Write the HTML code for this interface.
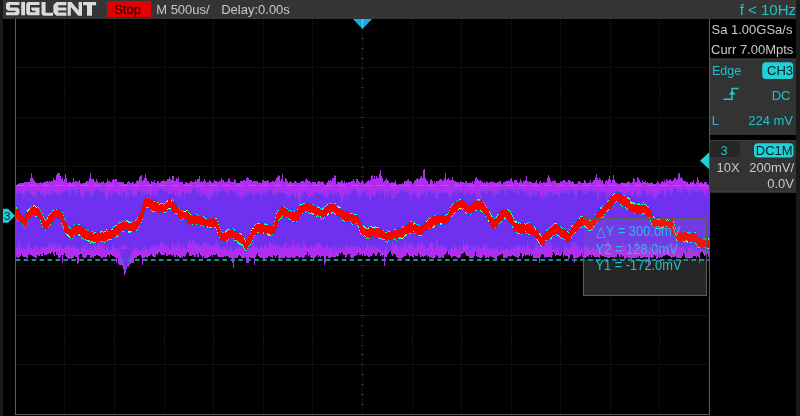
<!DOCTYPE html><html><head><meta charset="utf-8"><style>
html,body{margin:0;padding:0;background:#000;width:800px;height:416px;overflow:hidden}
svg{display:block;will-change:transform}
text{font-family:"Liberation Sans",sans-serif}
</style></head><body>
<svg width="800" height="416" viewBox="0 0 800 416">
<rect x="0" y="0" width="800" height="416" fill="#000"/>
<rect x="0" y="0" width="3" height="416" fill="#1a1a1a"/>
<rect x="796" y="0" width="4" height="416" fill="#1a1a1a"/>
<rect x="3" y="0" width="793" height="19" fill="#353535"/>
<rect x="583" y="218" width="124" height="78" fill="#171918"/>
<g shape-rendering="crispEdges" fill="none" stroke-width="1"><path d="M64.5 19V414" stroke="#191c19" stroke-dasharray="1 1"/><path d="M114.5 19V414" stroke="#191c19" stroke-dasharray="1 1"/><path d="M164.5 19V414" stroke="#191c19" stroke-dasharray="1 1"/><path d="M213.5 19V414" stroke="#191c19" stroke-dasharray="1 1"/><path d="M263.5 19V414" stroke="#191c19" stroke-dasharray="1 1"/><path d="M312.5 19V414" stroke="#191c19" stroke-dasharray="1 1"/><path d="M362.5 19V414" stroke="#191c19" stroke-dasharray="1 1"/><path d="M412.5 19V414" stroke="#191c19" stroke-dasharray="1 1"/><path d="M461.5 19V414" stroke="#191c19" stroke-dasharray="1 1"/><path d="M511.5 19V414" stroke="#191c19" stroke-dasharray="1 1"/><path d="M560.5 19V414" stroke="#191c19" stroke-dasharray="1 1"/><path d="M610.5 19V414" stroke="#191c19" stroke-dasharray="1 1"/><path d="M659.5 19V414" stroke="#191c19" stroke-dasharray="1 1"/><path d="M16 67.5H709" stroke="#191c19" stroke-dasharray="1 1"/><path d="M16 117.5H709" stroke="#191c19" stroke-dasharray="1 1"/><path d="M16 166.5H709" stroke="#191c19" stroke-dasharray="1 1"/><path d="M16 216.5H709" stroke="#191c19" stroke-dasharray="1 1"/><path d="M16 265.5H709" stroke="#191c19" stroke-dasharray="1 1"/><path d="M16 315.5H709" stroke="#191c19" stroke-dasharray="1 1"/><path d="M16 364.5H709" stroke="#191c19" stroke-dasharray="1 1"/><path d="M25 91.5H709" stroke="#191c19" stroke-dasharray="1 8.92"/><path d="M25 340.5H709" stroke="#191c19" stroke-dasharray="1 8.92"/><path d="M361 28.5h3M361 38.5h3M361 48.5h3M361 58.5h3M361 68.5h3M361 78.5h3M361 87.5h3M361 97.5h3M361 107.5h3M361 117.5h3M361 127.5h3M361 137.5h3M361 147.5h3M361 157.5h3M361 167.5h3M361 176.5h3M361 186.5h3M361 196.5h3M361 206.5h3M361 216.5h3M361 226.5h3M361 236.5h3M361 246.5h3M361 256.5h3M361 265.5h3M361 275.5h3M361 285.5h3M361 295.5h3M361 305.5h3M361 315.5h3M361 325.5h3M361 335.5h3M361 345.5h3M361 354.5h3M361 364.5h3M361 374.5h3M361 384.5h3M361 394.5h3M361 404.5h3" stroke="#2a2e2a"/><path d="M15.5 19V414.5H709.5V19" stroke="#5a5e5a"/></g>
<g shape-rendering="crispEdges">
<path d="M16 185H17V184H19V183H24V182H30V178H31V173H32V178H33V179H34V181H35V182H36V183H40V182H41V183H43V182H46V181H48V182H49V181H50V182H51V181H53V178H54V180H56V175H57V173H60V176H61V179H62V178H63V181H64V179H65V174H66V178H67V183H68V182H71V183H72V182H73V178H74V182H75V181H77V182H78V181H79V180H80V183H81V184H82V183H85V182H86V181H89V178H90V173H91V179H94V181H95V182H96V179H97V181H98V183H99V182H100V183H101V182H103V181H104V183H106V182H107V179H108V181H110V182H112V180H113V179H114V180H115V179H117V182H124V184H127V182H128V181H129V182H130V183H132V182H134V184H135V183H136V181H137V180H138V181H139V177H140V176H141V175H142V181H143V180H144V178H145V174H146V178H147V181H149V183H150V184H151V181H152V182H154V180H155V183H157V181H159V183H160V182H161V181H163V180H164V181H167V179H169V177H170V179H171V180H172V176H174V181H176V178H177V179H178V177H179V182H183V184H185V182H187V183H190V181H192V182H195V180H196V181H197V179H199V176H200V182H201V181H202V182H203V181H204V179H205V181H206V183H207V182H209V180H210V181H211V182H212V183H213V182H214V180H215V181H217V182H219V181H221V178H222V180H224V182H227V181H228V178H229V179H230V181H231V182H234V179H235V180H236V183H240V181H243V180H245V181H246V178H247V177H248V178H249V180H252V182H253V181H258V183H259V182H260V183H262V180H264V181H267V180H268V181H269V183H270V182H272V181H274V182H275V180H276V178H277V177H278V175H279V176H280V181H281V179H282V174H283V181H284V182H285V178H286V179H287V181H288V183H289V182H290V181H291V182H292V183H294V181H296V182H297V183H300V182H301V181H304V182H305V180H306V178H307V180H308V181H310V182H311V183H312V182H316V184H317V182H318V181H320V182H322V181H323V182H324V184H325V185H326V183H327V182H328V180H329V181H330V180H331V181H332V178H334V175H335V176H336V184H337V182H341V180H342V181H343V183H344V181H345V183H346V182H347V183H348V182H351V181H353V179H354V181H355V183H356V179H358V181H359V182H360V183H361V181H362V180H363V182H364V184H365V183H366V182H367V181H368V180H369V181H370V180H371V176H372V175H373V179H374V176H375V179H376V176H377V178H379V174H380V170H381V176H382V178H383V182H384V181H385V180H386V178H387V180H388V181H389V183H391V182H393V183H394V182H395V180H396V184H397V185H398V184H402V183H403V184H404V181H407V180H408V179H409V181H411V182H412V184H413V183H414V181H415V180H416V179H417V178H418V179H420V177H421V176H422V178H423V170H424V169H425V178H426V180H427V181H428V184H430V180H431V179H432V181H433V184H434V181H435V183H436V181H439V180H440V179H442V181H443V180H444V178H445V173H446V180H447V179H448V178H449V180H452V177H453V180H454V181H456V182H459V183H460V181H461V182H464V183H465V181H467V183H470V182H471V183H472V181H473V184H474V181H475V178H476V177H477V179H478V180H479V181H480V180H481V181H482V182H483V183H484V182H485V183H486V181H487V182H488V183H489V182H491V181H492V182H495V183H497V182H499V181H501V183H502V184H503V182H505V181H508V180H509V181H510V179H511V178H512V181H513V183H514V180H517V182H518V183H519V182H520V179H521V181H522V183H523V181H525V180H526V176H527V181H528V182H529V181H530V182H532V183H535V182H536V180H537V183H538V184H539V182H540V181H541V183H543V182H545V183H546V182H547V178H548V175H549V177H550V180H551V182H552V181H554V180H555V181H556V183H560V181H561V182H562V181H563V180H565V181H566V182H568V180H570V181H571V182H572V181H573V182H574V184H577V183H578V181H580V182H581V183H584V180H585V181H586V183H589V182H590V180H591V183H592V182H593V180H595V177H596V174H597V178H598V180H599V178H600V179H601V181H602V180H603V183H604V184H605V181H606V180H607V181H608V179H609V176H610V180H611V183H612V180H613V175H614V180H615V182H616V183H618V184H620V183H622V182H623V183H627V182H628V181H629V182H630V183H632V182H633V178H634V179H635V182H637V177H638V178H639V180H640V182H641V183H642V180H643V182H645V181H646V183H647V182H648V183H651V182H652V183H653V184H656V183H657V181H658V182H659V184H660V183H661V182H662V181H663V182H664V180H665V182H666V179H667V180H668V181H669V180H670V179H671V181H673V180H674V178H676V180H677V179H678V174H679V173H680V178H681V177H682V179H683V181H686V182H688V184H690V182H693V180H694V183H695V184H696V182H697V177H698V180H699V183H700V182H702V183H703V184H704V182H707V184H708V185H709V259H701V261H700V263H699V260H698V259H688V258H686V259H681V258H680V259H676V260H675V262H673V259H669V260H667V259H661V260H653V259H650V263H649V265H648V261H647V260H646V259H631V258H625V259H621V258H613V259H611V258H610V261H609V262H608V260H607V258H606V259H586V260H584V259H582V260H580V259H577V260H576V262H575V263H574V260H573V259H566V260H565V259H560V260H557V259H555V260H552V259H547V260H543V259H541V261H540V263H539V261H538V259H536V258H535V259H530V258H523V259H522V258H517V259H510V258H507V259H501V261H500V262H499V261H498V260H496V259H495V260H494V259H479V260H478V262H477V261H476V259H474V260H472V259H463V260H462V262H460V259H446V261H445V262H444V260H443V259H442V258H441V259H440V258H438V259H426V260H422V259H419V260H415V259H414V260H409V259H408V260H407V259H401V260H399V261H398V258H395V259H393V258H391V259H386V261H385V266H384V260H383V258H380V259H369V260H364V259H357V261H356V260H355V259H354V258H349V259H347V258H338V259H337V258H326V263H325V265H324V261H323V259H318V258H315V260H313V258H310V259H307V262H306V261H305V260H303V259H293V260H287V261H286V262H284V260H283V259H280V260H274V259H272V260H269V259H267V260H261V259H259V260H258V259H256V262H255V265H254V262H253V261H252V262H249V263H246V262H243V261H241V260H237V259H235V262H234V268H233V263H232V260H231V259H221V260H219V259H217V260H216V258H213V259H207V260H206V262H205V260H204V258H199V259H198V258H194V259H191V258H187V259H186V260H185V262H184V260H183V258H178V259H175V258H170V259H169V258H164V259H156V260H154V259H146V260H144V261H143V265H142V261H141V259H139V260H137V261H136V262H134V263H131V264H130V265H129V267H128V264H127V267H126V273H125V275H124V269H123V266H122V265H119V264H118V262H117V263H116V262H115V261H114V260H111V259H107V261H106V262H105V260H104V258H101V259H92V260H86V259H83V260H81V259H80V262H79V263H78V264H77V260H68V259H65V261H63V263H62V260H60V259H57V260H55V259H48V262H47V261H46V262H45V259H41V258H38V259H37V258H32V259H30V258H28V260H27V262H26V261H25V258H24V259H21V258H16Z" fill="#7030f0"/>
<path d="M16 185H17V184H19V183H24V182H30V178H31V173H32V178H33V179H34V181H35V182H36V183H40V182H41V183H43V182H46V181H48V182H49V181H50V182H51V181H53V178H54V180H56V175H57V173H60V176H61V179H62V178H63V181H64V179H65V174H66V178H67V183H68V182H71V183H72V182H73V178H74V182H75V181H77V182H78V181H79V180H80V183H81V184H82V183H85V182H86V181H89V178H90V173H91V179H94V181H95V182H96V179H97V181H98V183H99V182H100V183H101V182H103V181H104V183H106V182H107V179H108V181H110V182H112V180H113V179H114V180H115V179H117V182H124V184H127V182H128V181H129V182H130V183H132V182H134V184H135V183H136V181H137V180H138V181H139V177H140V176H141V175H142V181H143V180H144V178H145V174H146V178H147V181H149V183H150V184H151V181H152V182H154V180H155V183H157V181H159V183H160V182H161V181H163V180H164V181H167V179H169V177H170V179H171V180H172V176H174V181H176V178H177V179H178V177H179V182H183V184H185V182H187V183H190V181H192V182H195V180H196V181H197V179H199V176H200V182H201V181H202V182H203V181H204V179H205V181H206V183H207V182H209V180H210V181H211V182H212V183H213V182H214V180H215V181H217V182H219V181H221V178H222V180H224V182H227V181H228V178H229V179H230V181H231V182H234V179H235V180H236V183H240V181H243V180H245V181H246V178H247V177H248V178H249V180H252V182H253V181H258V183H259V182H260V183H262V180H264V181H267V180H268V181H269V183H270V182H272V181H274V182H275V180H276V178H277V177H278V175H279V176H280V181H281V179H282V174H283V181H284V182H285V178H286V179H287V181H288V183H289V182H290V181H291V182H292V183H294V181H296V182H297V183H300V182H301V181H304V182H305V180H306V178H307V180H308V181H310V182H311V183H312V182H316V184H317V182H318V181H320V182H322V181H323V182H324V184H325V185H326V183H327V182H328V180H329V181H330V180H331V181H332V178H334V175H335V176H336V184H337V182H341V180H342V181H343V183H344V181H345V183H346V182H347V183H348V182H351V181H353V179H354V181H355V183H356V179H358V181H359V182H360V183H361V181H362V180H363V182H364V184H365V183H366V182H367V181H368V180H369V181H370V180H371V176H372V175H373V179H374V176H375V179H376V176H377V178H379V174H380V170H381V176H382V178H383V182H384V181H385V180H386V178H387V180H388V181H389V183H391V182H393V183H394V182H395V180H396V184H397V185H398V184H402V183H403V184H404V181H407V180H408V179H409V181H411V182H412V184H413V183H414V181H415V180H416V179H417V178H418V179H420V177H421V176H422V178H423V170H424V169H425V178H426V180H427V181H428V184H430V180H431V179H432V181H433V184H434V181H435V183H436V181H439V180H440V179H442V181H443V180H444V178H445V173H446V180H447V179H448V178H449V180H452V177H453V180H454V181H456V182H459V183H460V181H461V182H464V183H465V181H467V183H470V182H471V183H472V181H473V184H474V181H475V178H476V177H477V179H478V180H479V181H480V180H481V181H482V182H483V183H484V182H485V183H486V181H487V182H488V183H489V182H491V181H492V182H495V183H497V182H499V181H501V183H502V184H503V182H505V181H508V180H509V181H510V179H511V178H512V181H513V183H514V180H517V182H518V183H519V182H520V179H521V181H522V183H523V181H525V180H526V176H527V181H528V182H529V181H530V182H532V183H535V182H536V180H537V183H538V184H539V182H540V181H541V183H543V182H545V183H546V182H547V178H548V175H549V177H550V180H551V182H552V181H554V180H555V181H556V183H560V181H561V182H562V181H563V180H565V181H566V182H568V180H570V181H571V182H572V181H573V182H574V184H577V183H578V181H580V182H581V183H584V180H585V181H586V183H589V182H590V180H591V183H592V182H593V180H595V177H596V174H597V178H598V180H599V178H600V179H601V181H602V180H603V183H604V184H605V181H606V180H607V181H608V179H609V176H610V180H611V183H612V180H613V175H614V180H615V182H616V183H618V184H620V183H622V182H623V183H627V182H628V181H629V182H630V183H632V182H633V178H634V179H635V182H637V177H638V178H639V180H640V182H641V183H642V180H643V182H645V181H646V183H647V182H648V183H651V182H652V183H653V184H656V183H657V181H658V182H659V184H660V183H661V182H662V181H663V182H664V180H665V182H666V179H667V180H668V181H669V180H670V179H671V181H673V180H674V178H676V180H677V179H678V174H679V173H680V178H681V177H682V179H683V181H686V182H688V184H690V182H693V180H694V183H695V184H696V182H697V177H698V180H699V183H700V182H702V183H703V184H704V182H707V184H708V185H709V195H708V191H707V194H706V197H705V195H704V193H702V191H701V192H699V189H698V192H695V191H692V193H691V192H690V195H689V193H688V191H687V190H686V189H684V190H683V193H678V192H677V190H676V188H674V191H673V193H672V196H671V191H670V193H669V192H668V189H667V194H666V198H665V197H664V191H662V193H661V194H658V195H657V198H655V201H654V198H653V195H652V193H651V196H650V194H649V196H648V195H647V196H646V191H644V190H642V194H641V196H640V197H639V196H636V191H634V195H633V197H632V195H630V193H628V195H627V194H626V196H625V199H624V200H623V198H622V197H621V196H620V197H619V196H618V193H617V195H616V194H615V198H614V201H613V197H611V195H610V196H609V198H608V200H607V199H606V192H605V194H604V193H603V192H601V193H600V194H599V201H598V199H597V190H596V195H595V193H593V191H592V189H591V192H590V191H588V193H586V195H585V194H584V193H582V190H580V191H578V194H577V199H575V194H574V195H573V190H571V191H570V194H568V193H567V194H565V191H564V192H563V194H561V193H560V197H559V198H558V194H556V195H555V194H554V196H553V195H552V192H551V194H549V193H548V197H547V196H546V195H545V198H544V194H543V201H542V198H541V196H540V193H539V191H538V194H537V196H535V193H534V194H532V196H531V198H530V195H529V196H528V195H527V193H526V191H525V193H524V192H523V191H522V192H521V191H519V195H517V193H516V189H515V193H514V192H513V190H512V189H511V191H509V188H508V191H507V194H506V195H505V193H504V189H503V191H501V189H500V193H498V194H496V198H495V195H494V197H493V198H492V191H491V192H489V191H488V195H487V194H486V193H484V192H483V190H482V198H480V200H479V196H478V199H477V198H476V194H475V193H473V196H471V195H470V192H469V194H468V193H467V192H466V195H465V194H464V190H463V193H461V192H459V190H458V193H457V195H455V192H453V194H452V195H451V198H449V195H448V194H447V192H446V193H442V194H441V192H440V193H439V194H438V199H437V198H436V196H435V193H432V194H431V192H428V195H427V198H426V196H425V192H424V193H423V195H421V196H420V198H419V203H418V198H417V196H416V195H415V193H414V196H413V194H412V197H411V201H410V194H409V193H407V192H404V193H403V191H401V192H399V194H398V193H397V197H396V194H395V197H394V199H392V197H391V196H390V192H389V197H388V195H387V193H386V197H385V199H384V192H382V193H381V194H380V191H379V195H378V193H377V191H376V195H375V197H374V195H373V196H372V194H371V200H369V196H366V190H365V193H363V194H361V198H359V194H358V200H357V193H356V189H355V191H354V190H353V191H352V193H351V194H349V195H348V196H347V198H346V194H345V195H344V198H343V201H342V204H341V199H340V196H339V192H338V193H337V196H336V193H335V194H334V193H333V196H332V193H331V192H330V193H329V196H328V197H327V198H326V197H324V195H323V193H322V194H320V195H319V193H318V194H316V192H315V193H314V198H313V196H312V195H311V198H310V197H309V198H308V193H307V195H306V193H305V192H304V197H303V192H302V196H301V203H300V207H299V204H298V198H297V193H296V200H295V196H294V194H293V195H291V196H290V197H288V199H287V195H286V194H284V192H283V194H282V193H279V192H278V194H277V195H275V196H274V195H272V191H271V190H270V191H269V192H268V193H266V196H265V194H264V193H263V195H262V200H261V196H260V193H259V194H258V192H257V193H256V194H255V196H254V197H253V195H252V194H251V193H250V194H248V195H247V196H246V197H245V195H244V198H243V197H241V200H240V198H239V196H238V195H237V196H236V195H235V192H233V193H232V190H231V191H230V193H229V194H228V197H227V193H225V192H224V190H223V189H222V191H221V192H219V194H218V195H216V194H215V192H214V193H213V197H212V196H211V199H210V200H208V197H207V199H206V195H204V193H203V195H202V196H200V194H199V192H198V193H196V189H195V188H193V191H192V193H190V196H189V193H186V194H185V197H184V192H183V193H182V194H181V197H180V196H179V197H177V194H176V196H175V195H174V192H173V193H172V194H169V195H168V191H166V192H164V191H162V189H160V190H159V191H158V194H157V197H156V196H155V191H154V194H152V195H151V199H150V195H149V194H146V195H145V194H144V193H143V196H142V194H141V193H140V190H139V192H137V196H133V195H131V191H130V193H129V196H128V195H127V197H126V199H125V193H123V194H122V197H121V194H120V196H119V197H118V194H117V192H115V193H112V196H111V195H110V193H109V196H108V200H106V198H105V194H104V193H102V191H99V193H98V190H97V189H96V190H95V192H94V195H93V196H92V197H91V198H90V194H89V193H88V192H87V191H86V192H85V195H84V196H83V200H82V198H81V194H80V189H79V192H78V190H77V193H76V196H75V193H74V190H72V193H71V194H70V196H69V191H67V190H65V193H64V192H63V193H62V195H61V196H60V194H59V195H58V196H57V195H56V192H55V193H53V191H52V193H51V196H50V194H49V196H48V195H47V193H46V197H45V199H44V195H41V194H40V192H37V196H36V197H34V196H32V195H31V193H28V192H27V191H26V193H25V197H24V200H23V194H20V192H19V193H18V194H16Z" fill="#8c38f0"/>
<path d="M16 248H17V245H18V244H19V240H20V244H21V249H22V247H25V250H26V249H27V244H28V243H29V244H30V247H31V248H32V249H33V247H35V246H36V244H37V247H39V249H40V247H43V246H44V248H46V247H47V246H48V244H49V242H50V245H51V243H52V246H53V244H54V243H55V245H56V248H57V244H60V246H61V245H62V248H63V249H64V248H65V247H66V245H67V246H68V245H69V246H70V248H71V247H74V245H75V248H76V247H77V248H78V249H79V250H80V251H81V247H82V248H83V245H86V249H87V245H88V248H89V249H90V247H92V251H93V248H94V246H95V243H96V247H97V245H98V244H99V241H100V245H102V242H103V246H105V250H106V247H107V248H108V249H109V250H110V249H112V245H113V244H114V245H115V248H116V251H117V248H118V251H119V247H120V248H121V245H123V246H124V244H125V246H126V247H128V248H129V249H130V248H131V250H132V248H133V249H134V244H135V248H136V247H137V248H138V250H140V251H142V248H144V245H145V246H146V248H147V250H148V249H149V248H150V245H153V247H154V244H155V246H156V247H157V245H158V246H159V245H160V242H161V241H162V244H164V243H165V244H166V247H167V246H169V248H170V250H171V246H172V242H173V244H174V247H175V244H176V245H177V243H178V241H179V244H181V248H182V245H184V248H185V247H186V249H187V244H188V243H189V239H190V240H191V243H192V240H194V241H195V244H196V243H197V244H199V245H202V247H203V241H204V242H205V244H206V241H207V245H209V241H210V247H211V245H213V246H214V245H215V242H216V240H217V242H218V245H220V248H221V249H222V247H224V246H225V248H226V241H227V249H228V250H229V247H230V245H231V247H232V251H234V249H235V247H236V249H237V246H239V244H240V246H241V248H242V246H243V249H244V252H245V246H246V244H247V249H248V248H249V246H250V249H251V248H252V241H253V243H254V246H255V248H256V246H257V248H259V249H260V247H261V245H262V248H263V247H264V245H267V248H269V242H270V243H271V244H273V246H274V245H275V244H276V246H277V245H279V247H280V248H281V246H282V247H284V243H287V248H288V245H289V248H290V245H291V246H292V240H293V246H294V242H295V246H296V243H297V245H299V244H300V248H301V246H302V247H303V242H304V241H305V247H306V246H307V247H308V248H310V245H312V247H313V246H314V245H315V247H316V243H317V245H318V242H319V243H320V244H321V246H322V245H323V247H324V250H325V248H326V247H327V244H328V247H329V248H330V247H333V252H334V245H335V246H336V249H337V250H338V248H340V246H341V250H342V246H343V249H344V247H345V246H346V244H347V245H348V248H349V247H350V245H351V246H356V247H357V248H358V246H360V248H361V249H362V246H364V249H365V248H366V245H367V242H368V245H369V246H370V245H371V248H372V247H373V245H374V247H375V246H376V248H377V246H378V247H379V250H380V247H381V250H382V252H383V251H384V250H385V247H388V251H389V253H390V252H391V245H392V241H393V243H394V245H395V244H398V247H399V246H400V245H401V248H402V244H403V246H404V243H405V242H406V244H407V247H408V245H409V242H410V244H411V242H412V245H414V246H415V248H416V247H417V244H418V243H419V242H420V244H421V241H422V240H423V244H424V245H425V249H427V248H428V247H429V245H430V241H431V242H432V243H433V244H434V248H435V245H436V240H437V241H438V245H439V246H440V245H441V247H442V243H443V247H445V246H446V248H447V250H449V251H450V249H451V247H453V250H454V243H455V247H457V249H458V250H459V245H461V251H462V246H463V240H464V246H465V245H466V242H467V243H468V245H469V246H470V251H471V246H472V245H473V247H474V245H475V246H476V249H477V248H478V245H479V247H480V248H481V249H482V246H483V245H484V244H487V245H488V248H489V247H490V246H491V248H492V249H493V248H494V249H496V246H498V252H499V250H500V246H502V250H503V247H504V250H505V249H506V248H507V249H508V250H509V249H510V247H511V246H512V248H513V246H514V247H515V249H516V247H517V244H518V245H519V246H521V247H522V248H523V245H524V247H525V246H527V240H528V245H529V249H530V247H531V250H532V249H534V248H535V244H536V242H537V245H538V246H539V244H540V243H541V245H542V246H543V247H544V246H545V239H546V242H548V246H549V240H550V242H551V245H552V250H553V249H555V247H556V248H557V246H558V247H559V253H560V252H562V251H564V246H565V245H566V247H568V246H569V248H570V246H571V241H572V243H574V242H576V246H577V244H578V245H579V249H580V250H581V248H582V246H583V250H584V246H585V247H586V246H587V245H588V248H589V246H590V249H591V250H592V247H594V248H595V249H597V246H599V247H600V251H601V250H602V247H604V244H606V241H608V240H609V243H610V246H612V244H613V247H614V249H615V250H616V248H617V250H620V247H621V246H622V239H623V245H625V244H626V247H627V251H628V249H629V250H630V251H631V246H632V248H633V247H634V244H635V241H636V242H637V241H638V242H639V246H641V247H642V246H643V244H645V248H647V246H648V247H649V244H650V245H651V248H652V249H653V250H654V249H655V243H656V249H657V250H659V249H660V250H661V252H662V250H664V249H665V247H667V243H668V245H669V249H670V251H671V242H672V243H673V247H674V244H675V248H677V247H678V246H679V247H680V248H682V247H685V250H686V253H687V251H688V248H690V247H691V248H692V245H693V248H694V250H695V249H696V247H697V250H698V251H700V249H701V250H703V244H704V250H705V246H706V248H708V249H709V259H701V261H700V263H699V260H698V259H688V258H686V259H681V258H680V259H676V260H675V262H673V259H669V260H667V259H661V260H653V259H650V263H649V265H648V261H647V260H646V259H631V258H625V259H621V258H613V259H611V258H610V261H609V262H608V260H607V258H606V259H586V260H584V259H582V260H580V259H577V260H576V262H575V263H574V260H573V259H566V260H565V259H560V260H557V259H555V260H552V259H547V260H543V259H541V261H540V263H539V261H538V259H536V258H535V259H530V258H523V259H522V258H517V259H510V258H507V259H501V261H500V262H499V261H498V260H496V259H495V260H494V259H479V260H478V262H477V261H476V259H474V260H472V259H463V260H462V262H460V259H446V261H445V262H444V260H443V259H442V258H441V259H440V258H438V259H426V260H422V259H419V260H415V259H414V260H409V259H408V260H407V259H401V260H399V261H398V258H395V259H393V258H391V259H386V261H385V266H384V260H383V258H380V259H369V260H364V259H357V261H356V260H355V259H354V258H349V259H347V258H338V259H337V258H326V263H325V265H324V261H323V259H318V258H315V260H313V258H310V259H307V262H306V261H305V260H303V259H293V260H287V261H286V262H284V260H283V259H280V260H274V259H272V260H269V259H267V260H261V259H259V260H258V259H256V262H255V265H254V262H253V261H252V262H249V263H246V262H243V261H241V260H237V259H235V262H234V268H233V263H232V260H231V259H221V260H219V259H217V260H216V258H213V259H207V260H206V262H205V260H204V258H199V259H198V258H194V259H191V258H187V259H186V260H185V262H184V260H183V258H178V259H175V258H170V259H169V258H164V259H156V260H154V259H146V260H144V261H143V265H142V261H141V259H139V260H137V261H136V262H134V263H131V264H130V265H129V267H128V264H127V267H126V273H125V275H124V269H123V266H122V265H119V264H118V262H117V263H116V262H115V261H114V260H111V259H107V261H106V262H105V260H104V258H101V259H92V260H86V259H83V260H81V259H80V262H79V263H78V264H77V260H68V259H65V261H63V263H62V260H60V259H57V260H55V259H48V262H47V261H46V262H45V259H41V258H38V259H37V258H32V259H30V258H28V260H27V262H26V261H25V258H24V259H21V258H16Z" fill="#8c38f0"/>
<path d="M16 185H17V184H19V183H24V182H30V178H31V173H32V178H33V179H34V181H35V182H36V183H40V182H41V183H43V182H46V181H48V182H49V181H50V182H51V181H53V178H54V180H56V175H57V173H60V176H61V179H62V178H63V181H64V179H65V174H66V178H67V183H68V182H71V183H72V182H73V178H74V182H75V181H77V182H78V181H79V180H80V183H81V184H82V183H85V182H86V181H89V178H90V173H91V179H94V181H95V182H96V179H97V181H98V183H99V182H100V183H101V182H103V181H104V183H106V182H107V179H108V181H110V182H112V180H113V179H114V180H115V179H117V182H124V184H127V182H128V181H129V182H130V183H132V182H134V184H135V183H136V181H137V180H138V181H139V177H140V176H141V175H142V181H143V180H144V178H145V174H146V178H147V181H149V183H150V184H151V181H152V182H154V180H155V183H157V181H159V183H160V182H161V181H163V180H164V181H167V179H169V177H170V179H171V180H172V176H174V181H176V178H177V179H178V177H179V182H183V184H185V182H187V183H190V181H192V182H195V180H196V181H197V179H199V176H200V182H201V181H202V182H203V181H204V179H205V181H206V183H207V182H209V180H210V181H211V182H212V183H213V182H214V180H215V181H217V182H219V181H221V178H222V180H224V182H227V181H228V178H229V179H230V181H231V182H234V179H235V180H236V183H240V181H243V180H245V181H246V178H247V177H248V178H249V180H252V182H253V181H258V183H259V182H260V183H262V180H264V181H267V180H268V181H269V183H270V182H272V181H274V182H275V180H276V178H277V177H278V175H279V176H280V181H281V179H282V174H283V181H284V182H285V178H286V179H287V181H288V183H289V182H290V181H291V182H292V183H294V181H296V182H297V183H300V182H301V181H304V182H305V180H306V178H307V180H308V181H310V182H311V183H312V182H316V184H317V182H318V181H320V182H322V181H323V182H324V184H325V185H326V183H327V182H328V180H329V181H330V180H331V181H332V178H334V175H335V176H336V184H337V182H341V180H342V181H343V183H344V181H345V183H346V182H347V183H348V182H351V181H353V179H354V181H355V183H356V179H358V181H359V182H360V183H361V181H362V180H363V182H364V184H365V183H366V182H367V181H368V180H369V181H370V180H371V176H372V175H373V179H374V176H375V179H376V176H377V178H379V174H380V170H381V176H382V178H383V182H384V181H385V180H386V178H387V180H388V181H389V183H391V182H393V183H394V182H395V180H396V184H397V185H398V184H402V183H403V184H404V181H407V180H408V179H409V181H411V182H412V184H413V183H414V181H415V180H416V179H417V178H418V179H420V177H421V176H422V178H423V170H424V169H425V178H426V180H427V181H428V184H430V180H431V179H432V181H433V184H434V181H435V183H436V181H439V180H440V179H442V181H443V180H444V178H445V173H446V180H447V179H448V178H449V180H452V177H453V180H454V181H456V182H459V183H460V181H461V182H464V183H465V181H467V183H470V182H471V183H472V181H473V184H474V181H475V178H476V177H477V179H478V180H479V181H480V180H481V181H482V182H483V183H484V182H485V183H486V181H487V182H488V183H489V182H491V181H492V182H495V183H497V182H499V181H501V183H502V184H503V182H505V181H508V180H509V181H510V179H511V178H512V181H513V183H514V180H517V182H518V183H519V182H520V179H521V181H522V183H523V181H525V180H526V176H527V181H528V182H529V181H530V182H532V183H535V182H536V180H537V183H538V184H539V182H540V181H541V183H543V182H545V183H546V182H547V178H548V175H549V177H550V180H551V182H552V181H554V180H555V181H556V183H560V181H561V182H562V181H563V180H565V181H566V182H568V180H570V181H571V182H572V181H573V182H574V184H577V183H578V181H580V182H581V183H584V180H585V181H586V183H589V182H590V180H591V183H592V182H593V180H595V177H596V174H597V178H598V180H599V178H600V179H601V181H602V180H603V183H604V184H605V181H606V180H607V181H608V179H609V176H610V180H611V183H612V180H613V175H614V180H615V182H616V183H618V184H620V183H622V182H623V183H627V182H628V181H629V182H630V183H632V182H633V178H634V179H635V182H637V177H638V178H639V180H640V182H641V183H642V180H643V182H645V181H646V183H647V182H648V183H651V182H652V183H653V184H656V183H657V181H658V182H659V184H660V183H661V182H662V181H663V182H664V180H665V182H666V179H667V180H668V181H669V180H670V179H671V181H673V180H674V178H676V180H677V179H678V174H679V173H680V178H681V177H682V179H683V181H686V182H688V184H690V182H693V180H694V183H695V184H696V182H697V177H698V180H699V183H700V182H702V183H703V184H704V182H707V184H708V185H709V193H708V189H707V192H706V193H705V191H704V189H703V191H702V189H699V187H698V188H695V187H694V188H692V190H691V188H690V189H688V190H687V189H686V187H684V188H683V189H682V188H679V189H676V187H674V190H672V193H671V189H668V187H667V188H666V191H664V189H663V190H661V192H660V190H659V191H658V194H656V192H655V195H653V192H652V190H651V191H649V192H648V191H647V195H646V190H645V189H644V187H642V190H641V192H640V193H638V195H637V194H636V190H634V194H633V195H632V190H630V192H627V191H626V194H623V193H621V191H620V192H619V189H618V190H617V192H616V193H615V194H614V197H613V193H611V192H607V191H606V188H605V190H604V192H603V191H600V190H599V192H598V193H597V189H596V192H595V191H594V189H593V188H591V189H589V190H588V189H586V190H582V189H579V190H577V192H576V195H575V190H573V187H572V189H571V190H570V188H569V189H566V191H565V190H563V192H560V193H559V194H558V192H555V191H553V192H552V190H551V191H548V192H547V191H546V192H545V194H544V193H543V197H542V194H540V191H539V190H538V191H535V190H534V191H532V192H531V194H530V192H529V191H526V190H524V189H522V190H521V188H520V189H519V188H518V189H516V188H515V190H514V189H512V188H511V189H509V187H508V189H507V188H503V190H501V188H500V189H498V190H496V193H495V192H494V190H493V191H492V189H491V190H489V188H488V191H487V189H484V190H483V189H482V192H481V191H480V195H479V191H478V196H477V197H476V193H475V191H473V194H472V191H471V189H470V188H469V193H468V192H467V190H466V193H464V189H461V188H458V189H457V190H456V191H454V189H453V190H451V193H450V194H449V193H448V192H447V191H446V192H443V190H442V191H440V192H437V191H436V190H435V191H434V192H432V193H431V190H427V192H426V191H425V189H424V191H421V192H420V194H419V197H418V195H417V194H416V192H415V191H414V192H413V190H412V194H411V198H410V193H409V191H407V189H403V188H402V189H401V188H399V193H398V192H397V194H396V190H395V194H394V193H393V190H391V191H389V194H388V192H387V191H386V194H385V195H384V189H382V190H379V192H378V191H377V189H376V191H375V193H374V194H372V191H371V197H370V198H369V193H368V190H367V189H366V188H365V189H364V190H363V191H361V195H360V197H359V191H358V194H357V189H356V187H355V188H353V189H351V190H349V191H348V192H346V193H344V194H343V195H342V198H341V194H340V192H339V191H337V192H336V190H335V191H332V190H330V191H328V192H327V193H324V192H320V193H319V191H318V192H316V190H314V194H313V195H312V194H311V195H310V194H309V197H308V192H307V193H306V192H305V190H304V194H303V191H302V192H301V198H298V196H297V192H296V197H295V193H294V191H293V192H291V191H290V192H289V194H288V196H287V194H286V193H285V192H284V190H282V189H281V190H280V191H278V192H274V191H273V190H271V189H266V192H265V190H262V195H261V193H260V191H258V189H257V191H256V192H253V190H252V189H250V190H249V192H247V191H246V192H245V191H244V195H243V194H241V196H240V194H239V193H238V191H237V190H236V191H235V190H232V189H230V191H229V192H227V191H226V190H224V189H223V187H222V190H221V188H219V191H217V190H216V189H213V191H211V193H210V194H207V196H206V194H205V193H204V192H203V191H202V190H200V187H198V188H197V189H196V187H192V188H191V191H190V195H189V192H186V193H184V190H183V191H181V194H180V193H179V194H178V192H177V191H176V194H175V193H174V190H172V191H170V190H169V191H168V189H166V190H164V188H162V187H160V189H159V190H155V189H154V190H153V191H152V192H151V196H150V192H148V190H146V191H143V189H141V190H140V189H139V190H137V194H134V192H133V191H132V192H131V188H127V191H126V192H125V189H124V190H123V191H122V190H121V189H120V193H119V194H118V191H115V190H114V191H112V192H111V191H109V192H108V196H107V195H105V190H104V191H103V188H102V189H100V188H98V189H97V188H95V190H94V192H93V191H90V190H89V189H87V188H86V187H85V190H84V193H83V194H81V193H80V188H76V189H75V190H74V188H72V189H70V190H67V189H65V192H64V191H62V192H61V193H60V191H59V192H58V193H57V192H56V191H55V192H53V189H51V190H49V192H48V193H47V192H46V196H44V191H42V192H41V191H40V189H39V191H35V192H34V194H32V192H31V190H30V189H27V190H26V191H24V193H23V192H22V193H21V192H20V190H18V191H16Z" fill="#b02cf0"/>
<path d="M16 250H17V248H20V250H21V251H22V250H24V249H25V252H26V251H27V248H28V249H29V248H32V249H33V250H37V251H39V250H40V248H41V250H42V247H44V249H46V248H47V250H48V248H51V246H52V248H53V244H54V245H55V247H56V248H57V245H58V247H60V249H62V248H63V249H64V248H65V247H66V248H67V249H68V247H70V248H74V246H75V249H79V251H81V250H82V248H85V249H88V252H89V251H90V249H91V250H92V251H93V249H94V248H95V245H96V247H97V246H100V247H101V251H102V248H103V250H106V248H107V249H108V250H109V251H112V249H113V248H114V249H115V248H116V251H117V248H118V251H121V248H122V246H123V247H124V246H125V248H126V249H129V250H131V251H132V250H134V248H135V250H136V249H137V250H140V251H143V252H144V251H145V250H146V249H147V251H149V252H150V251H151V250H152V249H153V248H154V245H155V246H156V247H157V248H158V249H159V247H160V244H161V246H162V249H163V247H164V248H165V247H166V248H169V250H171V249H172V245H174V249H176V247H177V248H178V247H179V249H181V250H182V248H183V249H187V248H188V246H189V242H190V241H191V245H194V246H197V247H199V248H200V247H201V246H202V247H203V246H204V248H206V245H210V248H211V246H213V249H214V248H215V245H216V244H217V246H218V248H220V249H222V250H224V248H226V245H227V249H228V250H231V251H234V250H235V248H236V250H237V247H238V250H239V249H241V252H242V250H244V252H245V249H246V248H247V249H248V248H249V247H250V249H251V248H252V246H253V247H254V248H255V249H256V250H257V249H259V250H260V247H262V248H263V247H264V246H266V247H267V249H268V248H269V242H270V246H271V247H272V246H273V247H276V248H279V247H280V249H281V247H284V245H285V244H286V246H287V250H288V247H289V248H290V249H291V248H292V242H293V248H294V244H295V246H297V247H299V248H300V251H301V249H302V250H303V246H304V245H305V247H306V246H307V247H308V249H309V248H312V250H313V248H314V247H315V248H316V245H317V247H318V246H321V249H322V248H324V250H325V248H327V245H328V249H329V250H330V249H332V251H333V252H334V250H336V252H337V250H338V252H339V251H340V249H341V251H342V248H343V251H344V250H346V249H348V250H349V249H350V248H351V249H355V248H356V249H359V248H361V249H362V250H364V249H365V248H366V247H367V248H368V250H370V248H372V250H373V249H374V250H377V249H378V248H379V250H380V249H381V252H383V251H388V253H390V252H391V250H392V249H393V247H397V249H402V247H403V248H404V247H405V246H406V248H407V249H408V247H409V244H410V246H411V245H412V248H413V249H415V250H416V249H417V247H418V246H420V248H421V244H423V247H425V249H427V248H428V247H429V245H430V243H432V245H433V247H434V249H436V247H440V249H441V247H443V248H445V247H446V249H447V251H451V249H453V251H454V248H455V247H457V249H458V250H459V248H461V251H463V245H464V247H465V246H468V249H470V251H471V250H472V251H473V250H477V249H478V247H479V249H480V250H481V251H482V248H483V247H484V249H486V250H487V251H488V252H489V251H490V249H491V251H493V249H495V251H496V249H498V252H500V250H502V252H503V250H504V251H505V249H506V248H507V249H508V251H509V249H510V250H511V249H512V251H513V249H516V248H517V245H518V248H519V249H520V251H522V250H523V248H524V249H527V246H529V249H531V250H532V249H533V250H535V247H536V244H537V248H538V250H539V248H540V247H541V248H542V249H543V247H545V246H548V249H549V246H550V244H551V247H552V250H554V249H555V251H556V252H557V250H558V251H559V253H560V252H562V251H563V253H564V249H565V245H566V247H567V250H568V249H569V251H570V250H571V247H573V248H574V245H576V249H577V247H578V248H579V250H581V249H583V250H585V248H588V249H589V250H597V249H599V250H600V251H601V250H602V249H605V248H606V247H607V244H608V245H609V247H610V249H613V251H614V252H615V250H616V248H617V250H620V249H622V246H623V249H624V248H626V251H628V249H629V251H630V252H631V250H633V247H634V248H635V244H636V246H637V244H638V248H640V249H645V250H646V251H649V247H650V248H651V251H654V250H655V247H656V250H657V252H658V253H659V251H661V252H665V251H666V249H667V248H668V250H669V251H671V249H672V250H674V248H675V250H676V248H677V247H678V246H679V247H680V250H682V251H683V250H685V252H686V253H687V252H688V250H689V251H691V252H692V251H694V253H696V252H697V253H699V254H701V250H703V249H704V251H705V250H706V249H708V252H709V259H701V261H700V263H699V260H698V259H688V258H686V259H681V258H680V259H676V260H675V262H673V259H669V260H667V259H661V260H653V259H650V263H649V265H648V261H647V260H646V259H631V258H625V259H621V258H613V259H611V258H610V261H609V262H608V260H607V258H606V259H586V260H584V259H582V260H580V259H577V260H576V262H575V263H574V260H573V259H566V260H565V259H560V260H557V259H555V260H552V259H547V260H543V259H541V261H540V263H539V261H538V259H536V258H535V259H530V258H523V259H522V258H517V259H510V258H507V259H501V261H500V262H499V261H498V260H496V259H495V260H494V259H479V260H478V262H477V261H476V259H474V260H472V259H463V260H462V262H460V259H446V261H445V262H444V260H443V259H442V258H441V259H440V258H438V259H426V260H422V259H419V260H415V259H414V260H409V259H408V260H407V259H401V260H399V261H398V258H395V259H393V258H391V259H386V261H385V266H384V260H383V258H380V259H369V260H364V259H357V261H356V260H355V259H354V258H349V259H347V258H338V259H337V258H326V263H325V265H324V261H323V259H318V258H315V260H313V258H310V259H307V262H306V261H305V260H303V259H293V260H287V261H286V262H284V260H283V259H280V260H274V259H272V260H269V259H267V260H261V259H259V260H258V259H256V262H255V265H254V262H253V261H252V262H249V263H246V262H243V261H241V260H237V259H235V262H234V268H233V263H232V260H231V259H221V260H219V259H217V260H216V258H213V259H207V260H206V262H205V260H204V258H199V259H198V258H194V259H191V258H187V259H186V260H185V262H184V260H183V258H178V259H175V258H170V259H169V258H164V259H156V260H154V259H146V260H144V261H143V265H142V261H141V259H139V260H137V261H136V262H134V263H131V264H130V265H129V267H128V264H127V267H126V273H125V275H124V269H123V266H122V265H119V264H118V262H117V263H116V262H115V261H114V260H111V259H107V261H106V262H105V260H104V258H101V259H92V260H86V259H83V260H81V259H80V262H79V263H78V264H77V260H68V259H65V261H63V263H62V260H60V259H57V260H55V259H48V262H47V261H46V262H45V259H41V258H38V259H37V258H32V259H30V258H28V260H27V262H26V261H25V258H24V259H21V258H16Z" fill="#b02cf0"/>
<path d="M117 249L120 252L122 258L125 268L127 269L129 262L131 255L134 249Z" fill="#7030f0"/>
<path d="M16 208H18V209H19V210H20V213H21V214H22V215H23V216H24V217H25V214H26V213H27V211H28V210H29V209H30V208H31V207H32V206H34V205H35V206H36V207H38V208H39V209H40V211H41V213H42V215H43V217H44V219H45V221H46V220H47V218H48V216H49V215H50V214H51V213H52V211H54V210H56V209H57V210H60V211H62V213H63V216H64V219H65V221H66V223H67V225H68V227H69V228H70V229H72V227H73V226H74V225H80V226H82V227H84V228H85V229H86V230H87V231H90V232H93V233H98V232H103V233H104V232H106V230H107V231H108V230H109V229H113V227H115V226H116V225H118V224H119V223H120V222H121V221H122V222H126V221H128V222H130V223H132V222H134V221H136V220H137V218H138V216H139V214H140V212H141V209H142V205H143V202H144V199H145V197H146V196H147V197H149V198H150V199H151V200H153V201H156V202H157V203H159V204H164V203H165V202H167V201H168V200H171V201H172V200H173V201H174V202H175V204H176V205H177V206H178V207H179V209H180V210H181V211H182V210H183V212H184V211H186V210H187V211H188V213H189V214H190V215H191V216H193V215H195V214H196V215H200V216H201V217H204V218H208V219H210V218H211V219H213V218H217V221H218V224H219V227H220V230H221V231H222V232H226V231H227V230H231V229H234V230H235V231H237V232H238V233H240V234H241V235H242V236H243V238H244V239H245V241H246V240H247V239H248V236H249V234H250V233H251V230H252V228H254V226H255V225H256V224H260V223H263V224H266V225H268V226H273V225H274V221H275V218H276V214H277V212H278V211H279V209H280V208H281V206H284V208H286V209H288V210H291V211H292V210H293V211H294V212H296V211H297V209H298V208H299V206H300V205H302V204H303V203H305V202H306V203H310V204H312V205H314V206H316V207H319V208H320V209H321V210H322V209H323V208H324V207H326V206H327V205H329V204H332V203H333V204H336V205H337V206H338V207H340V208H341V209H342V210H343V211H344V212H345V211H347V212H349V213H350V214H354V215H357V216H358V218H359V220H360V222H361V224H362V225H363V226H364V227H365V228H366V229H368V228H369V227H372V228H375V227H376V228H380V230H383V231H385V232H387V231H393V230H396V229H401V228H403V227H404V226H405V224H406V225H407V224H408V223H409V222H413V224H414V223H415V224H416V225H419V226H421V225H423V224H424V223H425V222H426V221H427V220H428V219H430V218H432V217H433V216H435V215H446V214H448V212H449V210H450V208H451V206H452V205H453V204H454V203H455V202H456V201H457V200H461V199H463V200H464V201H465V202H466V204H467V205H468V206H470V205H471V203H473V202H475V201H476V200H480V199H481V200H482V202H483V203H484V204H485V206H486V208H487V209H488V210H489V212H490V214H491V216H492V217H493V219H495V218H496V217H497V215H499V212H501V211H502V210H503V209H504V210H508V211H510V212H511V214H512V216H513V218H514V221H515V222H518V223H520V224H521V223H525V224H528V223H530V224H532V225H533V226H534V227H535V229H536V230H537V231H538V232H539V234H540V235H541V237H542V235H543V234H544V233H545V232H546V231H547V230H548V229H549V228H551V227H552V226H553V225H554V224H558V225H560V226H561V227H562V228H563V229H565V230H566V231H568V232H569V230H570V229H571V227H572V226H573V225H574V223H575V222H576V221H577V220H578V219H579V218H580V217H581V216H585V218H586V219H589V220H591V219H592V218H594V217H595V215H596V214H597V212H598V211H599V209H600V208H602V207H603V206H604V205H605V204H606V203H607V202H608V201H609V199H610V198H611V196H612V195H613V194H614V193H615V194H616V193H620V194H621V195H624V196H625V197H626V198H629V199H630V202H631V203H634V204H640V205H643V203H644V205H646V206H648V207H649V206H650V209H651V212H652V215H653V217H654V218H657V219H663V220H667V219H668V220H670V221H672V220H673V222H674V225H675V228H676V231H677V232H681V231H682V232H688V233H689V232H690V233H693V232H694V233H696V234H697V236H698V237H699V238H702V239H703V238H705V239H706V238H707V239H709V249H706V247H698V246H697V244H696V243H695V242H687V241H678V240H676V239H675V237H674V234H673V233H672V231H671V229H670V228H667V227H662V228H653V227H652V224H651V221H650V218H649V217H648V216H647V215H646V213H643V214H642V213H639V214H638V213H634V212H631V211H629V210H628V209H627V208H626V207H625V206H622V205H621V204H620V203H619V202H616V203H615V204H614V206H612V207H611V209H610V210H608V211H607V212H606V213H605V214H604V216H603V217H601V219H600V220H599V222H597V224H596V225H595V226H594V227H593V229H591V230H588V228H587V227H585V226H582V227H580V228H579V229H578V230H577V231H576V232H575V233H573V235H572V237H571V239H570V241H569V242H567V241H566V240H565V239H564V238H561V237H560V236H559V235H557V234H555V235H554V236H553V237H552V238H551V239H550V240H548V241H545V243H544V244H543V246H540V244H539V242H538V240H537V239H536V237H535V236H533V235H530V234H527V233H526V232H525V233H522V234H520V233H517V232H516V231H514V230H513V227H512V225H511V224H510V222H509V221H508V220H507V219H505V218H503V220H502V221H501V222H500V223H499V224H498V226H497V227H496V228H495V229H493V228H492V226H491V225H490V223H489V221H488V219H487V216H485V214H484V213H483V212H481V211H480V210H475V211H474V212H472V213H471V214H468V213H467V214H466V213H465V210H464V209H462V208H461V209H459V210H457V211H456V212H455V213H453V215H452V216H451V218H450V221H449V222H447V223H442V224H437V225H435V226H434V227H432V228H431V229H428V230H426V231H425V232H424V233H422V235H416V234H414V232H413V233H408V234H407V235H405V236H404V237H403V238H398V239H397V240H395V239H394V240H388V242H387V241H385V240H383V239H382V238H379V237H378V238H375V237H374V236H372V237H370V238H366V236H365V235H364V236H363V235H362V234H361V233H360V230H359V227H358V225H357V223H356V224H351V222H348V221H347V222H344V221H343V220H342V218H341V217H339V216H337V215H336V214H335V213H334V212H332V213H331V214H330V215H329V214H328V215H326V216H325V217H324V218H322V219H321V217H319V216H318V215H317V216H316V215H314V214H312V213H309V212H307V211H306V212H304V213H303V214H302V215H300V216H299V219H298V220H297V221H296V222H294V221H292V220H289V219H288V218H284V217H283V216H282V218H281V219H280V220H279V221H278V224H277V227H276V231H275V233H274V234H272V235H268V234H266V233H255V235H254V237H253V240H252V242H251V244H250V246H249V247H248V249H247V251H245V249H244V247H243V245H241V244H239V243H238V242H237V241H236V240H234V238H233V237H230V238H229V239H228V240H227V241H226V242H224V243H223V242H222V241H221V239H220V238H219V236H218V232H217V229H216V227H214V228H208V227H206V226H202V225H200V224H195V225H193V224H191V225H190V224H189V223H188V222H187V219H182V220H181V219H180V218H179V217H178V215H177V214H175V213H174V212H173V211H171V209H168V210H167V211H166V212H164V213H161V212H160V213H158V212H157V211H152V210H151V209H150V208H148V207H146V209H145V212H144V215H143V219H142V222H141V224H140V225H139V227H138V229H137V230H136V231H133V232H128V230H124V231H122V232H120V233H119V235H118V236H117V237H116V238H112V239H108V240H107V241H105V242H104V241H97V243H93V242H91V243H90V241H88V240H86V239H85V240H84V239H83V238H82V237H81V235H74V236H73V238H72V239H71V238H70V237H69V236H68V235H67V234H66V233H65V231H64V228H63V226H62V223H61V220H60V219H59V218H56V219H54V221H53V222H52V223H51V224H50V225H49V227H48V228H47V230H45V229H44V228H43V226H42V223H41V221H40V219H39V218H38V217H37V216H35V215H34V214H33V215H32V216H31V217H30V218H29V220H28V222H27V225H26V226H25V227H24V226H23V224H22V222H19V221H18V220H17V219H16Z" fill="#ff0000"/>
<path d="M16 207h1v1h-1zM33 206h1v1h-1zM40 210h1v1h-1zM41 212h1v1h-1zM42 214h1v1h-1zM44 218h1v1h-1zM45 220h1v1h-1zM46 219h1v1h-1zM47 217h1v1h-1zM48 215h1v1h-1zM49 214h1v1h-1zM50 213h1v1h-1zM52 210h1v1h-1zM53 210h1v1h-1zM56 209h1v1h-1zM62 212h1v1h-1zM63 215h1v1h-1zM64 218h1v1h-1zM65 220h1v1h-1zM69 227h1v1h-1zM70 228h1v1h-1zM78 224h1v1h-1zM79 224h1v1h-1zM94 232h1v1h-1zM95 232h1v1h-1zM100 231h1v1h-1zM100 232h1v1h-1zM101 231h1v1h-1zM102 231h1v1h-1zM103 232h1v1h-1zM104 231h1v1h-1zM105 231h1v1h-1zM107 231h1v1h-1zM112 228h1v1h-1zM113 226h1v1h-1zM114 226h1v1h-1zM115 225h1v1h-1zM116 225h1v1h-1zM119 222h1v1h-1zM130 222h1v1h-1zM131 222h1v1h-1zM132 221h1v1h-1zM135 220h1v1h-1zM136 219h1v1h-1zM137 217h1v1h-1zM163 204h1v1h-1zM164 203h1v1h-1zM165 202h1v1h-1zM166 201h1v1h-1zM167 200h1v1h-1zM171 200h1v1h-1zM171 201h1v1h-1zM198 215h1v1h-1zM205 218h1v1h-1zM206 218h1v1h-1zM225 231h1v1h-1zM226 230h1v1h-1zM227 229h1v1h-1zM228 229h1v1h-1zM229 229h1v1h-1zM234 229h1v1h-1zM234 230h1v1h-1zM259 223h1v1h-1zM266 224h1v1h-1zM267 224h1v1h-1zM273 225h1v1h-1zM274 221h1v1h-1zM277 211h1v1h-1zM278 210h1v1h-1zM284 207h1v1h-1zM290 210h1v1h-1zM291 211h1v1h-1zM302 204h1v1h-1zM303 203h1v1h-1zM304 203h1v1h-1zM319 207h1v1h-1zM320 208h1v1h-1zM321 209h1v1h-1zM322 208h1v1h-1zM323 207h1v1h-1zM325 206h1v1h-1zM326 205h1v1h-1zM334 203h1v1h-1zM335 203h1v1h-1zM350 213h1v1h-1zM351 213h1v1h-1zM354 214h1v1h-1zM355 214h1v1h-1zM356 214h1v1h-1zM363 225h1v1h-1zM374 227h1v1h-1zM375 226h1v1h-1zM378 227h1v1h-1zM383 230h1v1h-1zM388 231h1v1h-1zM389 231h1v1h-1zM394 229h1v1h-1zM395 229h1v1h-1zM413 223h1v1h-1zM413 224h1v1h-1zM414 222h1v1h-1zM414 223h1v1h-1zM419 225h1v1h-1zM445 215h1v1h-1zM446 214h1v1h-1zM447 214h1v1h-1zM477 199h1v1h-1zM478 199h1v1h-1zM479 199h1v1h-1zM489 211h1v1h-1zM490 213h1v1h-1zM491 215h1v1h-1zM492 216h1v1h-1zM510 211h1v1h-1zM511 213h1v1h-1zM512 215h1v1h-1zM513 218h1v1h-1zM514 221h1v1h-1zM518 222h1v1h-1zM526 223h1v1h-1zM539 234h1v1h-1zM540 235h1v1h-1zM546 230h1v1h-1zM547 229h1v1h-1zM560 226h1v1h-1zM561 227h1v1h-1zM562 228h1v1h-1zM569 229h1v1h-1zM574 222h1v1h-1zM580 216h1v1h-1zM595 214h1v1h-1zM600 207h1v1h-1zM600 208h1v1h-1zM601 207h1v1h-1zM601 208h1v1h-1zM623 194h1v1h-1zM624 195h1v1h-1zM627 197h1v1h-1zM628 197h1v1h-1zM629 198h1v1h-1zM630 201h1v1h-1zM631 202h1v1h-1zM646 205h1v1h-1zM653 216h1v1h-1zM653 217h1v1h-1zM654 217h1v1h-1zM654 218h1v1h-1zM658 219h1v1h-1zM659 219h1v1h-1zM687 232h1v1h-1zM694 232h1v1h-1zM695 232h1v1h-1zM708 239h1v1h-1zM35 216h1v1h-1zM36 216h1v1h-1zM45 230h1v1h-1zM65 233h1v1h-1zM66 234h1v1h-1zM67 235h1v1h-1zM68 236h1v1h-1zM69 237h1v1h-1zM78 235h1v1h-1zM79 235h1v1h-1zM85 239h1v1h-1zM86 240h1v1h-1zM87 240h1v1h-1zM91 241h1v1h-1zM92 241h1v1h-1zM93 242h1v1h-1zM102 241h1v1h-1zM117 236h1v1h-1zM117 235h1v1h-1zM122 231h1v1h-1zM123 231h1v1h-1zM128 232h1v1h-1zM129 232h1v1h-1zM130 232h1v1h-1zM136 230h1v1h-1zM137 229h1v1h-1zM138 227h1v1h-1zM141 222h1v1h-1zM142 219h1v1h-1zM164 212h1v1h-1zM165 212h1v1h-1zM170 209h1v1h-1zM175 213h1v1h-1zM176 213h1v1h-1zM177 214h1v1h-1zM192 224h1v1h-1zM207 227h1v1h-1zM214 227h1v1h-1zM215 227h1v1h-1zM219 237h1v1h-1zM226 241h1v1h-1zM235 240h1v1h-1zM237 242h1v1h-1zM238 243h1v1h-1zM239 244h1v1h-1zM240 243h1v1h-1zM241 244h1v1h-1zM242 244h1v1h-1zM243 247h1v1h-1zM244 249h1v1h-1zM245 250h1v1h-1zM246 250h1v1h-1zM247 248h1v1h-1zM250 244h1v1h-1zM251 242h1v1h-1zM252 240h1v1h-1zM270 235h1v1h-1zM288 218h1v1h-1zM289 219h1v1h-1zM290 219h1v1h-1zM292 221h1v1h-1zM293 221h1v1h-1zM296 221h1v1h-1zM305 212h1v1h-1zM306 211h1v1h-1zM308 212h1v1h-1zM309 213h1v1h-1zM310 213h1v1h-1zM311 213h1v1h-1zM311 212h1v1h-1zM312 214h1v1h-1zM312 213h1v1h-1zM313 214h1v1h-1zM313 213h1v1h-1zM320 217h1v1h-1zM321 219h1v1h-1zM323 218h1v1h-1zM324 217h1v1h-1zM327 215h1v1h-1zM328 214h1v1h-1zM332 212h1v1h-1zM342 220h1v1h-1zM344 221h1v1h-1zM352 224h1v1h-1zM356 223h1v1h-1zM357 225h1v1h-1zM367 237h1v1h-1zM378 237h1v1h-1zM379 238h1v1h-1zM380 238h1v1h-1zM381 238h1v1h-1zM385 241h1v1h-1zM387 242h1v1h-1zM388 240h1v1h-1zM398 238h1v1h-1zM399 237h1v1h-1zM400 237h1v1h-1zM404 236h1v1h-1zM405 235h1v1h-1zM406 235h1v1h-1zM409 233h1v1h-1zM413 231h1v1h-1zM414 233h1v1h-1zM432 227h1v1h-1zM440 224h1v1h-1zM441 224h1v1h-1zM454 213h1v1h-1zM455 212h1v1h-1zM461 208h1v1h-1zM462 209h1v1h-1zM475 210h1v1h-1zM476 210h1v1h-1zM485 216h1v1h-1zM488 221h1v1h-1zM504 218h1v1h-1zM505 219h1v1h-1zM512 226h1v1h-1zM516 232h1v1h-1zM517 233h1v1h-1zM518 233h1v1h-1zM519 233h1v1h-1zM521 234h1v1h-1zM528 234h1v1h-1zM529 234h1v1h-1zM537 239h1v1h-1zM538 241h1v1h-1zM550 239h1v1h-1zM550 238h1v1h-1zM551 238h1v1h-1zM551 237h1v1h-1zM560 237h1v1h-1zM561 238h1v1h-1zM562 238h1v1h-1zM564 239h1v1h-1zM571 237h1v1h-1zM572 235h1v1h-1zM581 227h1v1h-1zM582 226h1v1h-1zM583 226h1v1h-1zM584 226h1v1h-1zM585 227h1v1h-1zM586 227h1v1h-1zM587 228h1v1h-1zM588 230h1v1h-1zM589 230h1v1h-1zM590 230h1v1h-1zM591 229h1v1h-1zM592 229h1v1h-1zM593 226h1v1h-1zM606 211h1v1h-1zM607 210h1v1h-1zM608 209h1v1h-1zM615 202h1v1h-1zM616 201h1v1h-1zM634 213h1v1h-1zM642 214h1v1h-1zM649 218h1v1h-1zM650 221h1v1h-1zM651 224h1v1h-1zM656 228h1v1h-1zM657 228h1v1h-1zM663 226h1v1h-1zM690 242h1v1h-1zM691 242h1v1h-1zM694 242h1v1h-1zM695 243h1v1h-1zM696 244h1v1h-1zM697 246h1v1h-1zM698 247h1v1h-1zM705 247h1v1h-1zM706 249h1v1h-1z" fill="#00ffff"/>
<path d="M16 208h1v1h-1zM33 205h1v1h-1zM47 218h1v1h-1zM111 229h1v1h-1zM112 229h1v1h-1zM127 220h1v1h-1zM128 221h1v1h-1zM129 221h1v1h-1zM147 197h1v1h-1zM158 202h1v1h-1zM160 203h1v1h-1zM161 203h1v1h-1zM162 203h1v1h-1zM172 199h1v1h-1zM173 200h1v1h-1zM181 210h1v1h-1zM187 210h1v1h-1zM188 212h1v1h-1zM217 221h1v1h-1zM218 224h1v1h-1zM219 227h1v1h-1zM220 229h1v1h-1zM239 233h1v1h-1zM244 238h1v1h-1zM244 239h1v1h-1zM245 240h1v1h-1zM245 241h1v1h-1zM250 233h1v1h-1zM254 225h1v1h-1zM255 224h1v1h-1zM264 224h1v1h-1zM265 224h1v1h-1zM293 210h1v1h-1zM294 211h1v1h-1zM297 209h1v1h-1zM317 207h1v1h-1zM318 207h1v1h-1zM363 226h1v1h-1zM364 227h1v1h-1zM365 228h1v1h-1zM366 228h1v1h-1zM367 228h1v1h-1zM368 227h1v1h-1zM374 228h1v1h-1zM375 227h1v1h-1zM385 232h1v1h-1zM386 232h1v1h-1zM387 230h1v1h-1zM402 227h1v1h-1zM403 226h1v1h-1zM410 221h1v1h-1zM411 221h1v1h-1zM428 218h1v1h-1zM429 218h1v1h-1zM434 215h1v1h-1zM435 214h1v1h-1zM448 212h1v1h-1zM449 210h1v1h-1zM452 204h1v1h-1zM453 203h1v1h-1zM489 212h1v1h-1zM490 214h1v1h-1zM491 216h1v1h-1zM496 217h1v1h-1zM497 215h1v1h-1zM507 209h1v1h-1zM508 210h1v1h-1zM509 210h1v1h-1zM510 212h1v1h-1zM511 214h1v1h-1zM512 216h1v1h-1zM515 222h1v1h-1zM516 222h1v1h-1zM518 223h1v1h-1zM520 223h1v1h-1zM524 223h1v1h-1zM525 224h1v1h-1zM541 236h1v1h-1zM551 226h1v1h-1zM552 225h1v1h-1zM553 224h1v1h-1zM564 228h1v1h-1zM581 216h1v1h-1zM582 216h1v1h-1zM586 218h1v1h-1zM589 220h1v1h-1zM590 220h1v1h-1zM627 198h1v1h-1zM628 198h1v1h-1zM629 199h1v1h-1zM632 202h1v1h-1zM632 203h1v1h-1zM633 202h1v1h-1zM633 203h1v1h-1zM634 203h1v1h-1zM634 204h1v1h-1zM637 204h1v1h-1zM638 204h1v1h-1zM639 204h1v1h-1zM641 204h1v1h-1zM642 204h1v1h-1zM647 206h1v1h-1zM648 207h1v1h-1zM656 218h1v1h-1zM657 219h1v1h-1zM658 218h1v1h-1zM659 218h1v1h-1zM673 221h1v1h-1zM673 222h1v1h-1zM674 224h1v1h-1zM674 225h1v1h-1zM675 227h1v1h-1zM703 238h1v1h-1zM704 238h1v1h-1zM705 239h1v1h-1zM50 224h1v1h-1zM62 225h1v1h-1zM63 227h1v1h-1zM70 238h1v1h-1zM78 234h1v1h-1zM79 234h1v1h-1zM81 237h1v1h-1zM82 238h1v1h-1zM83 239h1v1h-1zM88 241h1v1h-1zM88 240h1v1h-1zM89 241h1v1h-1zM89 240h1v1h-1zM90 243h1v1h-1zM90 242h1v1h-1zM94 242h1v1h-1zM95 242h1v1h-1zM104 242h1v1h-1zM105 241h1v1h-1zM109 239h1v1h-1zM110 239h1v1h-1zM111 239h1v1h-1zM115 237h1v1h-1zM116 236h1v1h-1zM131 231h1v1h-1zM146 207h1v1h-1zM147 207h1v1h-1zM151 210h1v1h-1zM152 211h1v1h-1zM153 211h1v1h-1zM154 211h1v1h-1zM183 218h1v1h-1zM210 227h1v1h-1zM211 227h1v1h-1zM227 240h1v1h-1zM228 239h1v1h-1zM233 238h1v1h-1zM234 240h1v1h-1zM236 240h1v1h-1zM240 244h1v1h-1zM241 245h1v1h-1zM242 245h1v1h-1zM243 246h1v1h-1zM244 248h1v1h-1zM248 246h1v1h-1zM249 245h1v1h-1zM253 237h1v1h-1zM257 232h1v1h-1zM258 232h1v1h-1zM263 233h1v1h-1zM263 232h1v1h-1zM267 234h1v1h-1zM268 235h1v1h-1zM269 235h1v1h-1zM278 220h1v1h-1zM279 219h1v1h-1zM280 218h1v1h-1zM281 218h1v1h-1zM282 216h1v1h-1zM286 217h1v1h-1zM320 216h1v1h-1zM321 218h1v1h-1zM331 212h1v1h-1zM364 235h1v1h-1zM365 236h1v1h-1zM366 238h1v1h-1zM368 238h1v1h-1zM382 239h1v1h-1zM383 239h1v1h-1zM384 239h1v1h-1zM393 239h1v1h-1zM394 238h1v1h-1zM395 239h1v1h-1zM396 240h1v1h-1zM404 235h1v1h-1zM405 234h1v1h-1zM406 234h1v1h-1zM418 235h1v1h-1zM419 235h1v1h-1zM420 235h1v1h-1zM421 235h1v1h-1zM429 228h1v1h-1zM463 208h1v1h-1zM482 212h1v1h-1zM495 227h1v1h-1zM499 223h1v1h-1zM500 222h1v1h-1zM504 217h1v1h-1zM505 218h1v1h-1zM512 227h1v1h-1zM583 225h1v1h-1zM584 225h1v1h-1zM585 226h1v1h-1zM593 227h1v1h-1zM601 217h1v1h-1zM602 217h1v1h-1zM603 216h1v1h-1zM643 213h1v1h-1zM644 213h1v1h-1zM649 217h1v1h-1zM650 220h1v1h-1zM651 223h1v1h-1zM676 239h1v1h-1zM683 241h1v1h-1zM684 241h1v1h-1zM685 241h1v1h-1zM699 247h1v1h-1z" fill="#30ff50"/>
<path d="M16 206h1v1h-1zM17 207h1v1h-1zM18 208h1v1h-1zM19 209h1v1h-1zM20 212h1v1h-1zM21 213h1v1h-1zM24 216h1v1h-1zM25 213h1v1h-1zM26 212h1v1h-1zM27 209h1v1h-1zM28 208h1v1h-1zM30 206h1v1h-1zM31 205h1v1h-1zM32 205h1v1h-1zM32 204h1v1h-1zM34 204h1v1h-1zM35 205h1v1h-1zM36 206h1v1h-1zM43 215h1v1h-1zM48 214h1v1h-1zM49 213h1v1h-1zM51 211h1v1h-1zM54 209h1v1h-1zM55 209h1v1h-1zM56 208h1v1h-1zM57 209h1v1h-1zM58 209h1v1h-1zM59 209h1v1h-1zM60 210h1v1h-1zM61 210h1v1h-1zM66 222h1v1h-1zM67 224h1v1h-1zM68 225h1v1h-1zM69 226h1v1h-1zM70 227h1v1h-1zM71 228h1v1h-1zM71 227h1v1h-1zM72 226h1v1h-1zM72 225h1v1h-1zM75 224h1v1h-1zM75 223h1v1h-1zM76 224h1v1h-1zM77 224h1v1h-1zM80 225h1v1h-1zM81 225h1v1h-1zM82 226h1v1h-1zM83 225h1v1h-1zM84 226h1v1h-1zM85 228h1v1h-1zM85 227h1v1h-1zM86 229h1v1h-1zM86 228h1v1h-1zM89 230h1v1h-1zM89 229h1v1h-1zM90 231h1v1h-1zM90 230h1v1h-1zM93 232h1v1h-1zM94 231h1v1h-1zM95 231h1v1h-1zM96 231h1v1h-1zM97 232h1v1h-1zM98 231h1v1h-1zM99 231h1v1h-1zM104 230h1v1h-1zM105 230h1v1h-1zM107 230h1v1h-1zM109 228h1v1h-1zM110 228h1v1h-1zM111 227h1v1h-1zM113 225h1v1h-1zM114 225h1v1h-1zM116 223h1v1h-1zM117 224h1v1h-1zM117 223h1v1h-1zM118 222h1v1h-1zM120 221h1v1h-1zM124 221h1v1h-1zM125 220h1v1h-1zM126 219h1v1h-1zM133 220h1v1h-1zM134 219h1v1h-1zM138 215h1v1h-1zM138 214h1v1h-1zM139 213h1v1h-1zM139 212h1v1h-1zM140 211h1v1h-1zM140 210h1v1h-1zM141 208h1v1h-1zM142 204h1v1h-1zM143 201h1v1h-1zM144 199h1v1h-1zM145 197h1v1h-1zM146 196h1v1h-1zM147 196h1v1h-1zM154 200h1v1h-1zM155 200h1v1h-1zM156 201h1v1h-1zM159 203h1v1h-1zM159 202h1v1h-1zM163 203h1v1h-1zM164 202h1v1h-1zM165 201h1v1h-1zM168 199h1v1h-1zM169 199h1v1h-1zM170 199h1v1h-1zM174 201h1v1h-1zM174 200h1v1h-1zM174 202h1v1h-1zM175 203h1v1h-1zM175 202h1v1h-1zM175 204h1v1h-1zM176 204h1v1h-1zM177 205h1v1h-1zM180 209h1v1h-1zM180 208h1v1h-1zM182 209h1v1h-1zM182 208h1v1h-1zM189 212h1v1h-1zM193 214h1v1h-1zM193 215h1v1h-1zM194 214h1v1h-1zM194 215h1v1h-1zM195 212h1v1h-1zM196 213h1v1h-1zM197 213h1v1h-1zM199 214h1v1h-1zM200 215h1v1h-1zM201 216h1v1h-1zM205 217h1v1h-1zM205 216h1v1h-1zM206 217h1v1h-1zM206 216h1v1h-1zM207 217h1v1h-1zM208 218h1v1h-1zM209 218h1v1h-1zM210 217h1v1h-1zM211 218h1v1h-1zM212 218h1v1h-1zM213 217h1v1h-1zM214 217h1v1h-1zM215 217h1v1h-1zM216 217h1v1h-1zM217 219h1v1h-1zM218 223h1v1h-1zM218 222h1v1h-1zM219 226h1v1h-1zM219 225h1v1h-1zM221 230h1v1h-1zM222 231h1v1h-1zM223 231h1v1h-1zM224 231h1v1h-1zM228 228h1v1h-1zM230 228h1v1h-1zM231 227h1v1h-1zM232 227h1v1h-1zM233 227h1v1h-1zM234 228h1v1h-1zM235 229h1v1h-1zM236 229h1v1h-1zM237 230h1v1h-1zM238 232h1v1h-1zM239 232h1v1h-1zM239 231h1v1h-1zM240 232h1v1h-1zM241 233h1v1h-1zM243 236h1v1h-1zM250 232h1v1h-1zM251 229h1v1h-1zM251 228h1v1h-1zM252 227h1v1h-1zM252 226h1v1h-1zM253 227h1v1h-1zM253 226h1v1h-1zM254 224h1v1h-1zM255 223h1v1h-1zM259 222h1v1h-1zM260 221h1v1h-1zM261 221h1v1h-1zM262 221h1v1h-1zM263 223h1v1h-1zM264 222h1v1h-1zM265 222h1v1h-1zM268 225h1v1h-1zM268 224h1v1h-1zM269 225h1v1h-1zM269 224h1v1h-1zM270 225h1v1h-1zM270 224h1v1h-1zM271 225h1v1h-1zM272 225h1v1h-1zM273 224h1v1h-1zM274 220h1v1h-1zM275 216h1v1h-1zM276 212h1v1h-1zM279 207h1v1h-1zM280 206h1v1h-1zM281 204h1v1h-1zM282 204h1v1h-1zM283 204h1v1h-1zM288 208h1v1h-1zM289 208h1v1h-1zM290 209h1v1h-1zM291 210h1v1h-1zM292 209h1v1h-1zM292 208h1v1h-1zM292 210h1v1h-1zM295 211h1v1h-1zM296 210h1v1h-1zM298 207h1v1h-1zM302 202h1v1h-1zM307 202h1v1h-1zM307 201h1v1h-1zM311 203h1v1h-1zM311 202h1v1h-1zM312 203h1v1h-1zM313 203h1v1h-1zM314 204h1v1h-1zM315 205h1v1h-1zM316 206h1v1h-1zM317 205h1v1h-1zM318 205h1v1h-1zM324 205h1v1h-1zM327 203h1v1h-1zM328 204h1v1h-1zM334 202h1v1h-1zM335 202h1v1h-1zM336 204h1v1h-1zM341 208h1v1h-1zM346 210h1v1h-1zM347 211h1v1h-1zM348 211h1v1h-1zM349 212h1v1h-1zM354 213h1v1h-1zM355 213h1v1h-1zM356 213h1v1h-1zM357 215h1v1h-1zM357 214h1v1h-1zM358 217h1v1h-1zM358 216h1v1h-1zM359 219h1v1h-1zM359 218h1v1h-1zM360 221h1v1h-1zM360 220h1v1h-1zM361 224h1v1h-1zM362 225h1v1h-1zM364 225h1v1h-1zM365 226h1v1h-1zM366 227h1v1h-1zM367 227h1v1h-1zM368 226h1v1h-1zM376 226h1v1h-1zM377 226h1v1h-1zM379 226h1v1h-1zM380 228h1v1h-1zM381 229h1v1h-1zM381 230h1v1h-1zM384 230h1v1h-1zM384 229h1v1h-1zM385 231h1v1h-1zM386 231h1v1h-1zM388 229h1v1h-1zM389 229h1v1h-1zM390 229h1v1h-1zM391 229h1v1h-1zM392 230h1v1h-1zM392 229h1v1h-1zM393 229h1v1h-1zM393 228h1v1h-1zM397 228h1v1h-1zM397 227h1v1h-1zM398 228h1v1h-1zM398 227h1v1h-1zM399 228h1v1h-1zM399 227h1v1h-1zM400 228h1v1h-1zM401 227h1v1h-1zM404 225h1v1h-1zM405 223h1v1h-1zM406 224h1v1h-1zM407 223h1v1h-1zM407 222h1v1h-1zM408 222h1v1h-1zM408 221h1v1h-1zM409 221h1v1h-1zM416 223h1v1h-1zM417 223h1v1h-1zM418 223h1v1h-1zM420 225h1v1h-1zM420 224h1v1h-1zM421 224h1v1h-1zM421 223h1v1h-1zM422 224h1v1h-1zM422 223h1v1h-1zM423 223h1v1h-1zM424 222h1v1h-1zM424 221h1v1h-1zM425 221h1v1h-1zM425 220h1v1h-1zM426 220h1v1h-1zM427 219h1v1h-1zM431 217h1v1h-1zM431 216h1v1h-1zM432 216h1v1h-1zM433 215h1v1h-1zM434 214h1v1h-1zM435 213h1v1h-1zM438 213h1v1h-1zM439 213h1v1h-1zM440 213h1v1h-1zM441 213h1v1h-1zM442 213h1v1h-1zM443 213h1v1h-1zM448 211h1v1h-1zM449 209h1v1h-1zM453 202h1v1h-1zM454 202h1v1h-1zM454 201h1v1h-1zM455 201h1v1h-1zM456 200h1v1h-1zM457 199h1v1h-1zM458 199h1v1h-1zM462 197h1v1h-1zM463 198h1v1h-1zM464 200h1v1h-1zM467 204h1v1h-1zM468 205h1v1h-1zM469 205h1v1h-1zM470 204h1v1h-1zM471 201h1v1h-1zM472 201h1v1h-1zM473 200h1v1h-1zM474 201h1v1h-1zM475 200h1v1h-1zM481 199h1v1h-1zM487 208h1v1h-1zM488 209h1v1h-1zM496 215h1v1h-1zM497 213h1v1h-1zM498 213h1v1h-1zM499 211h1v1h-1zM500 211h1v1h-1zM501 210h1v1h-1zM503 208h1v1h-1zM504 209h1v1h-1zM505 209h1v1h-1zM506 209h1v1h-1zM506 208h1v1h-1zM510 210h1v1h-1zM511 212h1v1h-1zM512 214h1v1h-1zM517 221h1v1h-1zM520 222h1v1h-1zM521 222h1v1h-1zM522 222h1v1h-1zM523 222h1v1h-1zM524 222h1v1h-1zM525 223h1v1h-1zM530 222h1v1h-1zM531 223h1v1h-1zM532 224h1v1h-1zM533 225h1v1h-1zM536 228h1v1h-1zM539 232h1v1h-1zM540 233h1v1h-1zM541 235h1v1h-1zM541 237h1v1h-1zM543 233h1v1h-1zM543 232h1v1h-1zM544 232h1v1h-1zM544 231h1v1h-1zM545 231h1v1h-1zM545 230h1v1h-1zM551 225h1v1h-1zM552 224h1v1h-1zM553 223h1v1h-1zM560 225h1v1h-1zM561 226h1v1h-1zM562 227h1v1h-1zM563 228h1v1h-1zM563 227h1v1h-1zM564 227h1v1h-1zM569 228h1v1h-1zM574 221h1v1h-1zM576 220h1v1h-1zM577 219h1v1h-1zM578 218h1v1h-1zM579 216h1v1h-1zM581 215h1v1h-1zM582 215h1v1h-1zM583 215h1v1h-1zM586 217h1v1h-1zM587 218h1v1h-1zM587 217h1v1h-1zM588 218h1v1h-1zM596 213h1v1h-1zM596 212h1v1h-1zM597 211h1v1h-1zM597 210h1v1h-1zM598 210h1v1h-1zM598 209h1v1h-1zM599 208h1v1h-1zM604 204h1v1h-1zM605 203h1v1h-1zM606 202h1v1h-1zM609 197h1v1h-1zM610 197h1v1h-1zM611 195h1v1h-1zM612 194h1v1h-1zM613 193h1v1h-1zM614 192h1v1h-1zM615 192h1v1h-1zM616 191h1v1h-1zM620 193h1v1h-1zM620 192h1v1h-1zM621 194h1v1h-1zM621 193h1v1h-1zM622 194h1v1h-1zM622 193h1v1h-1zM623 193h1v1h-1zM624 194h1v1h-1zM625 196h1v1h-1zM626 197h1v1h-1zM632 201h1v1h-1zM633 201h1v1h-1zM634 202h1v1h-1zM636 203h1v1h-1zM636 202h1v1h-1zM637 202h1v1h-1zM638 202h1v1h-1zM639 202h1v1h-1zM640 203h1v1h-1zM646 204h1v1h-1zM647 205h1v1h-1zM647 204h1v1h-1zM648 206h1v1h-1zM648 205h1v1h-1zM655 216h1v1h-1zM656 217h1v1h-1zM656 216h1v1h-1zM657 218h1v1h-1zM657 217h1v1h-1zM658 217h1v1h-1zM659 217h1v1h-1zM660 218h1v1h-1zM661 218h1v1h-1zM662 218h1v1h-1zM663 219h1v1h-1zM664 219h1v1h-1zM668 219h1v1h-1zM668 218h1v1h-1zM671 220h1v1h-1zM672 219h1v1h-1zM673 220h1v1h-1zM674 223h1v1h-1zM675 226h1v1h-1zM676 229h1v1h-1zM677 230h1v1h-1zM678 230h1v1h-1zM679 231h1v1h-1zM679 230h1v1h-1zM681 231h1v1h-1zM682 232h1v1h-1zM683 232h1v1h-1zM685 230h1v1h-1zM686 230h1v1h-1zM688 231h1v1h-1zM689 230h1v1h-1zM690 231h1v1h-1zM694 231h1v1h-1zM695 231h1v1h-1zM696 232h1v1h-1zM697 234h1v1h-1zM698 235h1v1h-1zM699 237h1v1h-1zM700 237h1v1h-1zM701 237h1v1h-1zM702 238h1v1h-1zM703 237h1v1h-1zM704 237h1v1h-1zM705 238h1v1h-1zM18 222h1v1h-1zM22 225h1v1h-1zM23 227h1v1h-1zM24 228h1v1h-1zM26 226h1v1h-1zM27 223h1v1h-1zM28 221h1v1h-1zM29 218h1v1h-1zM30 217h1v1h-1zM37 217h1v1h-1zM38 218h1v1h-1zM39 219h1v1h-1zM40 222h1v1h-1zM41 224h1v1h-1zM42 227h1v1h-1zM43 228h1v1h-1zM43 227h1v1h-1zM44 229h1v1h-1zM44 228h1v1h-1zM46 230h1v1h-1zM47 228h1v1h-1zM51 223h1v1h-1zM55 219h1v1h-1zM56 218h1v1h-1zM57 218h1v1h-1zM58 218h1v1h-1zM58 219h1v1h-1zM59 219h1v1h-1zM59 220h1v1h-1zM60 220h1v1h-1zM60 221h1v1h-1zM61 222h1v1h-1zM64 231h1v1h-1zM67 236h1v1h-1zM68 237h1v1h-1zM69 238h1v1h-1zM71 239h1v1h-1zM75 235h1v1h-1zM75 236h1v1h-1zM76 235h1v1h-1zM76 236h1v1h-1zM77 235h1v1h-1zM77 236h1v1h-1zM78 236h1v1h-1zM79 236h1v1h-1zM80 236h1v1h-1zM84 240h1v1h-1zM94 243h1v1h-1zM95 243h1v1h-1zM96 243h1v1h-1zM106 241h1v1h-1zM106 242h1v1h-1zM109 240h1v1h-1zM110 240h1v1h-1zM111 240h1v1h-1zM112 238h1v1h-1zM113 238h1v1h-1zM114 238h1v1h-1zM115 238h1v1h-1zM116 237h1v1h-1zM120 232h1v1h-1zM121 232h1v1h-1zM124 230h1v1h-1zM125 230h1v1h-1zM126 230h1v1h-1zM126 231h1v1h-1zM127 230h1v1h-1zM127 231h1v1h-1zM128 233h1v1h-1zM129 233h1v1h-1zM130 233h1v1h-1zM132 232h1v1h-1zM132 233h1v1h-1zM133 231h1v1h-1zM134 231h1v1h-1zM135 231h1v1h-1zM136 231h1v1h-1zM137 230h1v1h-1zM138 228h1v1h-1zM141 223h1v1h-1zM142 220h1v1h-1zM143 215h1v1h-1zM143 216h1v1h-1zM144 212h1v1h-1zM144 213h1v1h-1zM145 209h1v1h-1zM145 210h1v1h-1zM148 208h1v1h-1zM149 208h1v1h-1zM150 209h1v1h-1zM155 211h1v1h-1zM158 213h1v1h-1zM159 213h1v1h-1zM160 212h1v1h-1zM161 213h1v1h-1zM162 213h1v1h-1zM164 213h1v1h-1zM165 213h1v1h-1zM167 210h1v1h-1zM167 211h1v1h-1zM168 209h1v1h-1zM168 210h1v1h-1zM169 209h1v1h-1zM169 210h1v1h-1zM172 211h1v1h-1zM172 212h1v1h-1zM178 217h1v1h-1zM179 218h1v1h-1zM180 220h1v1h-1zM181 221h1v1h-1zM182 220h1v1h-1zM184 219h1v1h-1zM185 219h1v1h-1zM186 219h1v1h-1zM186 220h1v1h-1zM187 222h1v1h-1zM187 223h1v1h-1zM188 223h1v1h-1zM188 224h1v1h-1zM189 224h1v1h-1zM190 225h1v1h-1zM193 225h1v1h-1zM194 225h1v1h-1zM195 224h1v1h-1zM200 226h1v1h-1zM201 226h1v1h-1zM202 227h1v1h-1zM203 227h1v1h-1zM204 226h1v1h-1zM204 227h1v1h-1zM205 226h1v1h-1zM205 227h1v1h-1zM206 227h1v1h-1zM206 228h1v1h-1zM208 228h1v1h-1zM209 228h1v1h-1zM209 229h1v1h-1zM210 229h1v1h-1zM211 229h1v1h-1zM212 228h1v1h-1zM212 229h1v1h-1zM213 228h1v1h-1zM213 229h1v1h-1zM219 238h1v1h-1zM220 239h1v1h-1zM221 242h1v1h-1zM222 243h1v1h-1zM225 242h1v1h-1zM226 242h1v1h-1zM229 239h1v1h-1zM230 237h1v1h-1zM231 237h1v1h-1zM232 237h1v1h-1zM235 241h1v1h-1zM236 241h1v1h-1zM236 242h1v1h-1zM237 243h1v1h-1zM238 244h1v1h-1zM239 245h1v1h-1zM240 245h1v1h-1zM241 246h1v1h-1zM242 246h1v1h-1zM245 251h1v1h-1zM246 251h1v1h-1zM247 249h1v1h-1zM248 247h1v1h-1zM249 246h1v1h-1zM250 245h1v1h-1zM250 243h1v1h-1zM251 243h1v1h-1zM251 241h1v1h-1zM252 241h1v1h-1zM252 239h1v1h-1zM255 234h1v1h-1zM256 234h1v1h-1zM257 233h1v1h-1zM258 233h1v1h-1zM259 233h1v1h-1zM260 233h1v1h-1zM261 233h1v1h-1zM264 234h1v1h-1zM265 234h1v1h-1zM270 236h1v1h-1zM273 234h1v1h-1zM274 233h1v1h-1zM274 234h1v1h-1zM275 231h1v1h-1zM276 227h1v1h-1zM277 224h1v1h-1zM278 221h1v1h-1zM279 220h1v1h-1zM280 219h1v1h-1zM281 219h1v1h-1zM282 217h1v1h-1zM283 217h1v1h-1zM286 218h1v1h-1zM286 219h1v1h-1zM287 219h1v1h-1zM288 219h1v1h-1zM288 220h1v1h-1zM289 220h1v1h-1zM289 221h1v1h-1zM290 220h1v1h-1zM290 221h1v1h-1zM291 220h1v1h-1zM292 222h1v1h-1zM293 222h1v1h-1zM294 222h1v1h-1zM295 222h1v1h-1zM296 222h1v1h-1zM297 220h1v1h-1zM298 219h1v1h-1zM299 216h1v1h-1zM300 215h1v1h-1zM301 215h1v1h-1zM307 212h1v1h-1zM310 214h1v1h-1zM311 214h1v1h-1zM312 215h1v1h-1zM313 215h1v1h-1zM314 215h1v1h-1zM315 215h1v1h-1zM319 218h1v1h-1zM323 217h1v1h-1zM324 216h1v1h-1zM325 216h1v1h-1zM326 215h1v1h-1zM336 215h1v1h-1zM337 216h1v1h-1zM338 216h1v1h-1zM339 218h1v1h-1zM340 218h1v1h-1zM341 219h1v1h-1zM350 222h1v1h-1zM351 224h1v1h-1zM353 225h1v1h-1zM354 225h1v1h-1zM355 225h1v1h-1zM357 226h1v1h-1zM361 235h1v1h-1zM362 236h1v1h-1zM363 237h1v1h-1zM369 238h1v1h-1zM370 237h1v1h-1zM371 237h1v1h-1zM372 236h1v1h-1zM375 238h1v1h-1zM376 238h1v1h-1zM377 238h1v1h-1zM385 242h1v1h-1zM389 240h1v1h-1zM390 240h1v1h-1zM391 240h1v1h-1zM392 240h1v1h-1zM393 240h1v1h-1zM394 239h1v1h-1zM395 240h1v1h-1zM396 241h1v1h-1zM397 239h1v1h-1zM397 240h1v1h-1zM398 237h1v1h-1zM412 233h1v1h-1zM415 234h1v1h-1zM415 235h1v1h-1zM416 235h1v1h-1zM416 236h1v1h-1zM417 235h1v1h-1zM417 236h1v1h-1zM418 236h1v1h-1zM418 234h1v1h-1zM419 236h1v1h-1zM419 234h1v1h-1zM424 232h1v1h-1zM425 231h1v1h-1zM426 230h1v1h-1zM427 230h1v1h-1zM428 229h1v1h-1zM430 230h1v1h-1zM431 229h1v1h-1zM432 228h1v1h-1zM435 225h1v1h-1zM435 226h1v1h-1zM436 225h1v1h-1zM436 226h1v1h-1zM440 225h1v1h-1zM441 225h1v1h-1zM442 223h1v1h-1zM442 224h1v1h-1zM443 223h1v1h-1zM443 224h1v1h-1zM444 223h1v1h-1zM445 223h1v1h-1zM445 224h1v1h-1zM446 223h1v1h-1zM446 224h1v1h-1zM447 222h1v1h-1zM448 222h1v1h-1zM449 221h1v1h-1zM456 211h1v1h-1zM457 210h1v1h-1zM458 211h1v1h-1zM459 210h1v1h-1zM460 210h1v1h-1zM463 209h1v1h-1zM465 213h1v1h-1zM466 214h1v1h-1zM467 213h1v1h-1zM467 214h1v1h-1zM468 214h1v1h-1zM468 215h1v1h-1zM469 214h1v1h-1zM469 215h1v1h-1zM472 212h1v1h-1zM473 212h1v1h-1zM474 211h1v1h-1zM480 211h1v1h-1zM480 212h1v1h-1zM481 212h1v1h-1zM481 213h1v1h-1zM483 213h1v1h-1zM484 214h1v1h-1zM488 222h1v1h-1zM491 227h1v1h-1zM496 227h1v1h-1zM496 228h1v1h-1zM497 226h1v1h-1zM498 225h1v1h-1zM499 224h1v1h-1zM500 223h1v1h-1zM502 220h1v1h-1zM503 219h1v1h-1zM506 219h1v1h-1zM506 220h1v1h-1zM507 220h1v1h-1zM508 221h1v1h-1zM509 222h1v1h-1zM510 224h1v1h-1zM511 225h1v1h-1zM513 230h1v1h-1zM513 231h1v1h-1zM514 231h1v1h-1zM515 231h1v1h-1zM520 234h1v1h-1zM522 233h1v1h-1zM522 234h1v1h-1zM523 233h1v1h-1zM523 234h1v1h-1zM524 233h1v1h-1zM524 234h1v1h-1zM525 232h1v1h-1zM526 234h1v1h-1zM528 235h1v1h-1zM529 235h1v1h-1zM530 235h1v1h-1zM530 236h1v1h-1zM531 235h1v1h-1zM532 235h1v1h-1zM535 237h1v1h-1zM539 245h1v1h-1zM540 247h1v1h-1zM542 246h1v1h-1zM543 244h1v1h-1zM544 243h1v1h-1zM545 241h1v1h-1zM546 241h1v1h-1zM547 241h1v1h-1zM552 237h1v1h-1zM553 236h1v1h-1zM554 235h1v1h-1zM555 234h1v1h-1zM558 234h1v1h-1zM559 235h1v1h-1zM565 241h1v1h-1zM566 241h1v1h-1zM567 242h1v1h-1zM568 242h1v1h-1zM569 241h1v1h-1zM570 239h1v1h-1zM573 233h1v1h-1zM573 234h1v1h-1zM574 234h1v1h-1zM575 233h1v1h-1zM576 231h1v1h-1zM577 230h1v1h-1zM578 229h1v1h-1zM579 229h1v1h-1zM580 228h1v1h-1zM581 228h1v1h-1zM582 227h1v1h-1zM583 227h1v1h-1zM584 227h1v1h-1zM585 228h1v1h-1zM589 231h1v1h-1zM590 231h1v1h-1zM591 230h1v1h-1zM592 230h1v1h-1zM593 228h1v1h-1zM594 227h1v1h-1zM595 226h1v1h-1zM596 224h1v1h-1zM597 222h1v1h-1zM598 222h1v1h-1zM599 220h1v1h-1zM600 219h1v1h-1zM604 215h1v1h-1zM605 213h1v1h-1zM611 207h1v1h-1zM611 208h1v1h-1zM612 206h1v1h-1zM612 207h1v1h-1zM628 210h1v1h-1zM631 213h1v1h-1zM632 213h1v1h-1zM633 213h1v1h-1zM635 214h1v1h-1zM636 213h1v1h-1zM636 214h1v1h-1zM637 213h1v1h-1zM637 214h1v1h-1zM638 214h1v1h-1zM638 215h1v1h-1zM639 213h1v1h-1zM640 213h1v1h-1zM641 213h1v1h-1zM645 214h1v1h-1zM646 215h1v1h-1zM646 216h1v1h-1zM647 216h1v1h-1zM647 217h1v1h-1zM648 217h1v1h-1zM648 218h1v1h-1zM649 219h1v1h-1zM650 222h1v1h-1zM651 225h1v1h-1zM652 228h1v1h-1zM653 229h1v1h-1zM654 229h1v1h-1zM655 229h1v1h-1zM656 229h1v1h-1zM657 229h1v1h-1zM664 227h1v1h-1zM664 226h1v1h-1zM668 228h1v1h-1zM669 228h1v1h-1zM670 229h1v1h-1zM671 232h1v1h-1zM672 234h1v1h-1zM673 235h1v1h-1zM674 237h1v1h-1zM674 238h1v1h-1zM675 239h1v1h-1zM675 240h1v1h-1zM677 241h1v1h-1zM678 241h1v1h-1zM681 241h1v1h-1zM681 242h1v1h-1zM682 241h1v1h-1zM682 242h1v1h-1zM692 242h1v1h-1zM693 242h1v1h-1zM700 247h1v1h-1zM701 247h1v1h-1zM702 247h1v1h-1zM702 248h1v1h-1zM703 247h1v1h-1zM703 248h1v1h-1zM704 247h1v1h-1zM704 248h1v1h-1zM707 249h1v1h-1zM708 249h1v1h-1z" fill="#2048ff"/>
<path d="M30 207h1v1h-1zM31 206h1v1h-1zM37 206h1v1h-1zM38 207h1v1h-1zM39 208h1v1h-1zM51 212h1v1h-1zM73 225h1v1h-1zM74 224h1v1h-1zM87 230h1v1h-1zM88 230h1v1h-1zM91 231h1v1h-1zM92 231h1v1h-1zM121 220h1v1h-1zM122 221h1v1h-1zM123 221h1v1h-1zM157 202h1v1h-1zM178 206h1v1h-1zM179 208h1v1h-1zM189 213h1v1h-1zM195 213h1v1h-1zM196 214h1v1h-1zM197 214h1v1h-1zM221 231h1v1h-1zM222 232h1v1h-1zM223 232h1v1h-1zM232 228h1v1h-1zM233 228h1v1h-1zM243 237h1v1h-1zM264 223h1v1h-1zM265 223h1v1h-1zM283 205h1v1h-1zM286 208h1v1h-1zM287 208h1v1h-1zM288 210h1v1h-1zM289 210h1v1h-1zM312 204h1v1h-1zM313 204h1v1h-1zM314 205h1v1h-1zM317 206h1v1h-1zM318 206h1v1h-1zM324 206h1v1h-1zM329 203h1v1h-1zM330 203h1v1h-1zM331 203h1v1h-1zM337 205h1v1h-1zM338 206h1v1h-1zM339 206h1v1h-1zM340 208h1v1h-1zM352 213h1v1h-1zM353 213h1v1h-1zM369 226h1v1h-1zM370 226h1v1h-1zM415 223h1v1h-1zM416 224h1v1h-1zM417 224h1v1h-1zM418 224h1v1h-1zM430 217h1v1h-1zM456 201h1v1h-1zM457 200h1v1h-1zM458 200h1v1h-1zM477 200h1v1h-1zM478 200h1v1h-1zM479 200h1v1h-1zM480 198h1v1h-1zM483 202h1v1h-1zM484 203h1v1h-1zM493 218h1v1h-1zM494 218h1v1h-1zM495 217h1v1h-1zM498 214h1v1h-1zM513 217h1v1h-1zM514 220h1v1h-1zM519 222h1v1h-1zM527 223h1v1h-1zM528 222h1v1h-1zM529 222h1v1h-1zM534 226h1v1h-1zM535 228h1v1h-1zM548 228h1v1h-1zM549 227h1v1h-1zM550 227h1v1h-1zM579 217h1v1h-1zM602 206h1v1h-1zM603 205h1v1h-1zM635 203h1v1h-1zM637 203h1v1h-1zM638 203h1v1h-1zM639 203h1v1h-1zM649 205h1v1h-1zM675 228h1v1h-1zM676 230h1v1h-1zM677 231h1v1h-1zM678 231h1v1h-1zM684 231h1v1h-1zM688 232h1v1h-1zM688 233h1v1h-1zM689 231h1v1h-1zM689 232h1v1h-1zM690 232h1v1h-1zM690 233h1v1h-1zM16 219h1v1h-1zM17 220h1v1h-1zM18 221h1v1h-1zM22 224h1v1h-1zM23 226h1v1h-1zM24 227h1v1h-1zM26 225h1v1h-1zM27 222h1v1h-1zM28 220h1v1h-1zM48 227h1v1h-1zM49 225h1v1h-1zM62 226h1v1h-1zM63 228h1v1h-1zM72 238h1v1h-1zM73 236h1v1h-1zM74 235h1v1h-1zM80 235h1v1h-1zM91 242h1v1h-1zM92 242h1v1h-1zM93 243h1v1h-1zM100 241h1v1h-1zM101 241h1v1h-1zM139 225h1v1h-1zM163 212h1v1h-1zM166 211h1v1h-1zM180 219h1v1h-1zM181 220h1v1h-1zM182 219h1v1h-1zM200 225h1v1h-1zM201 225h1v1h-1zM202 226h1v1h-1zM203 226h1v1h-1zM222 242h1v1h-1zM271 235h1v1h-1zM272 234h1v1h-1zM281 217h1v1h-1zM282 215h1v1h-1zM341 218h1v1h-1zM361 234h1v1h-1zM362 235h1v1h-1zM363 236h1v1h-1zM386 241h1v1h-1zM399 238h1v1h-1zM400 238h1v1h-1zM410 233h1v1h-1zM411 233h1v1h-1zM470 214h1v1h-1zM471 213h1v1h-1zM498 224h1v1h-1zM536 239h1v1h-1zM545 240h1v1h-1zM546 240h1v1h-1zM547 240h1v1h-1zM552 236h1v1h-1zM579 228h1v1h-1zM580 227h1v1h-1zM594 226h1v1h-1zM595 225h1v1h-1zM596 223h1v1h-1zM597 221h1v1h-1zM607 211h1v1h-1zM608 210h1v1h-1zM613 206h1v1h-1zM614 204h1v1h-1zM642 213h1v1h-1zM652 226h1v1h-1zM653 227h1v1h-1zM661 228h1v1h-1zM663 227h1v1h-1zM674 236h1v1h-1zM675 238h1v1h-1zM677 240h1v1h-1z" fill="#00c0ff"/>
<path d="M27 211h1v1h-1zM28 210h1v1h-1zM34 205h1v1h-1zM35 206h1v1h-1zM36 207h1v1h-1zM93 233h1v1h-1zM106 229h1v1h-1zM159 204h1v1h-1zM183 211h1v1h-1zM184 211h1v1h-1zM185 211h1v1h-1zM186 210h1v1h-1zM190 214h1v1h-1zM240 233h1v1h-1zM241 234h1v1h-1zM251 230h1v1h-1zM252 228h1v1h-1zM253 228h1v1h-1zM275 217h1v1h-1zM276 213h1v1h-1zM327 204h1v1h-1zM337 206h1v1h-1zM338 207h1v1h-1zM339 207h1v1h-1zM368 228h1v1h-1zM371 226h1v1h-1zM372 227h1v1h-1zM373 227h1v1h-1zM426 221h1v1h-1zM427 220h1v1h-1zM515 221h1v1h-1zM516 221h1v1h-1zM534 227h1v1h-1zM535 229h1v1h-1zM571 226h1v1h-1zM572 225h1v1h-1zM579 218h1v1h-1zM613 194h1v1h-1zM614 193h1v1h-1zM630 202h1v1h-1zM631 203h1v1h-1zM666 220h1v1h-1zM667 219h1v1h-1zM67 234h1v1h-1zM68 235h1v1h-1zM69 236h1v1h-1zM128 231h1v1h-1zM129 231h1v1h-1zM130 231h1v1h-1zM167 209h1v1h-1zM168 208h1v1h-1zM169 208h1v1h-1zM207 226h1v1h-1zM209 227h1v1h-1zM216 229h1v1h-1zM217 232h1v1h-1zM267 233h1v1h-1zM268 234h1v1h-1zM269 234h1v1h-1zM327 214h1v1h-1zM328 213h1v1h-1zM359 230h1v1h-1zM360 233h1v1h-1zM401 238h1v1h-1zM402 238h1v1h-1zM403 237h1v1h-1zM433 227h1v1h-1zM434 226h1v1h-1zM440 223h1v1h-1zM441 223h1v1h-1zM458 209h1v1h-1zM459 208h1v1h-1zM460 208h1v1h-1zM465 212h1v1h-1zM466 213h1v1h-1zM480 210h1v1h-1zM481 211h1v1h-1zM488 220h1v1h-1zM541 246h1v1h-1zM661 227h1v1h-1zM666 226h1v1h-1zM686 240h1v1h-1zM687 241h1v1h-1z" fill="#f0ff20"/>
<path d="M27 210h1v1h-1zM28 209h1v1h-1zM29 208h1v1h-1zM29 209h1v1h-1zM43 216h1v1h-1zM68 226h1v1h-1zM85 229h1v1h-1zM118 223h1v1h-1zM120 222h1v1h-1zM125 221h1v1h-1zM126 220h1v1h-1zM127 221h1v1h-1zM128 222h1v1h-1zM129 222h1v1h-1zM154 201h1v1h-1zM167 201h1v1h-1zM203 216h1v1h-1zM204 217h1v1h-1zM215 218h1v1h-1zM216 218h1v1h-1zM225 232h1v1h-1zM226 231h1v1h-1zM227 230h1v1h-1zM257 223h1v1h-1zM258 223h1v1h-1zM299 205h1v1h-1zM300 204h1v1h-1zM301 204h1v1h-1zM322 209h1v1h-1zM323 208h1v1h-1zM340 207h1v1h-1zM364 226h1v1h-1zM365 227h1v1h-1zM376 227h1v1h-1zM377 227h1v1h-1zM450 207h1v1h-1zM451 205h1v1h-1zM459 199h1v1h-1zM460 199h1v1h-1zM485 205h1v1h-1zM486 207h1v1h-1zM496 216h1v1h-1zM497 214h1v1h-1zM539 233h1v1h-1zM540 234h1v1h-1zM554 223h1v1h-1zM555 223h1v1h-1zM556 223h1v1h-1zM567 231h1v1h-1zM568 232h1v1h-1zM607 201h1v1h-1zM608 200h1v1h-1zM612 195h1v1h-1zM643 202h1v1h-1zM644 204h1v1h-1zM645 204h1v1h-1zM655 218h1v1h-1zM668 220h1v1h-1zM708 238h1v1h-1zM40 220h1v1h-1zM41 223h1v1h-1zM42 226h1v1h-1zM61 223h1v1h-1zM107 240h1v1h-1zM108 239h1v1h-1zM148 207h1v1h-1zM170 208h1v1h-1zM196 224h1v1h-1zM237 241h1v1h-1zM238 242h1v1h-1zM239 243h1v1h-1zM254 235h1v1h-1zM302 213h1v1h-1zM316 216h1v1h-1zM317 215h1v1h-1zM318 216h1v1h-1zM331 213h1v1h-1zM333 212h1v1h-1zM334 213h1v1h-1zM335 214h1v1h-1zM343 220h1v1h-1zM350 221h1v1h-1zM351 223h1v1h-1zM358 227h1v1h-1zM358 226h1v1h-1zM433 226h1v1h-1zM434 225h1v1h-1zM451 216h1v1h-1zM452 215h1v1h-1zM453 213h1v1h-1zM501 221h1v1h-1zM525 231h1v1h-1zM526 233h1v1h-1zM537 240h1v1h-1zM538 242h1v1h-1zM539 243h1v1h-1zM540 245h1v1h-1zM553 235h1v1h-1zM556 234h1v1h-1zM557 235h1v1h-1zM558 235h1v1h-1zM559 236h1v1h-1zM574 233h1v1h-1zM575 232h1v1h-1zM604 214h1v1h-1zM620 204h1v1h-1zM621 205h1v1h-1zM622 206h1v1h-1zM625 207h1v1h-1zM626 208h1v1h-1zM627 209h1v1h-1zM658 228h1v1h-1zM659 228h1v1h-1zM660 228h1v1h-1zM662 227h1v1h-1zM676 240h1v1h-1zM686 241h1v1h-1zM687 242h1v1h-1zM707 248h1v1h-1zM708 248h1v1h-1z" fill="#40ffc0"/>
<path d="M111 228h1v1h-1zM133 221h1v1h-1zM134 220h1v1h-1zM152 199h1v1h-1zM153 200h1v1h-1zM184 210h1v1h-1zM185 210h1v1h-1zM186 209h1v1h-1zM191 215h1v1h-1zM192 215h1v1h-1zM198 214h1v1h-1zM202 216h1v1h-1zM230 229h1v1h-1zM231 228h1v1h-1zM235 230h1v1h-1zM236 230h1v1h-1zM237 231h1v1h-1zM242 235h1v1h-1zM246 239h1v1h-1zM248 235h1v1h-1zM249 233h1v1h-1zM256 223h1v1h-1zM260 222h1v1h-1zM261 222h1v1h-1zM262 222h1v1h-1zM281 205h1v1h-1zM282 205h1v1h-1zM302 203h1v1h-1zM303 202h1v1h-1zM304 202h1v1h-1zM308 202h1v1h-1zM309 202h1v1h-1zM310 203h1v1h-1zM332 202h1v1h-1zM333 203h1v1h-1zM342 209h1v1h-1zM343 210h1v1h-1zM344 211h1v1h-1zM345 210h1v1h-1zM361 223h1v1h-1zM362 224h1v1h-1zM379 227h1v1h-1zM380 229h1v1h-1zM396 228h1v1h-1zM436 214h1v1h-1zM437 214h1v1h-1zM441 214h1v1h-1zM442 214h1v1h-1zM443 214h1v1h-1zM462 198h1v1h-1zM463 199h1v1h-1zM465 201h1v1h-1zM466 203h1v1h-1zM476 199h1v1h-1zM482 201h1v1h-1zM502 209h1v1h-1zM536 229h1v1h-1zM537 230h1v1h-1zM538 231h1v1h-1zM557 223h1v1h-1zM558 224h1v1h-1zM559 224h1v1h-1zM570 228h1v1h-1zM575 221h1v1h-1zM589 219h1v1h-1zM590 219h1v1h-1zM591 218h1v1h-1zM592 217h1v1h-1zM593 217h1v1h-1zM594 216h1v1h-1zM609 198h1v1h-1zM615 193h1v1h-1zM616 192h1v1h-1zM617 192h1v1h-1zM618 192h1v1h-1zM619 192h1v1h-1zM640 204h1v1h-1zM650 208h1v1h-1zM651 211h1v1h-1zM652 214h1v1h-1zM665 219h1v1h-1zM681 230h1v1h-1zM682 231h1v1h-1zM683 231h1v1h-1zM685 231h1v1h-1zM686 231h1v1h-1zM696 233h1v1h-1zM697 235h1v1h-1zM698 236h1v1h-1zM706 237h1v1h-1zM707 238h1v1h-1zM19 222h1v1h-1zM20 222h1v1h-1zM21 222h1v1h-1zM25 226h1v1h-1zM31 216h1v1h-1zM32 215h1v1h-1zM33 214h1v1h-1zM34 215h1v1h-1zM52 222h1v1h-1zM53 221h1v1h-1zM54 219h1v1h-1zM97 241h1v1h-1zM98 241h1v1h-1zM99 241h1v1h-1zM103 241h1v1h-1zM118 235h1v1h-1zM119 233h1v1h-1zM131 232h1v1h-1zM140 224h1v1h-1zM156 211h1v1h-1zM157 212h1v1h-1zM163 213h1v1h-1zM175 214h1v1h-1zM176 214h1v1h-1zM177 215h1v1h-1zM183 219h1v1h-1zM191 224h1v1h-1zM197 224h1v1h-1zM198 224h1v1h-1zM199 224h1v1h-1zM210 228h1v1h-1zM211 228h1v1h-1zM218 236h1v1h-1zM223 243h1v1h-1zM224 242h1v1h-1zM229 238h1v1h-1zM255 233h1v1h-1zM256 233h1v1h-1zM262 233h1v1h-1zM264 233h1v1h-1zM265 233h1v1h-1zM284 218h1v1h-1zM285 218h1v1h-1zM302 214h1v1h-1zM303 213h1v1h-1zM304 212h1v1h-1zM319 217h1v1h-1zM339 217h1v1h-1zM340 217h1v1h-1zM343 221h1v1h-1zM344 222h1v1h-1zM348 222h1v1h-1zM349 222h1v1h-1zM367 238h1v1h-1zM373 236h1v1h-1zM374 237h1v1h-1zM383 240h1v1h-1zM384 240h1v1h-1zM413 232h1v1h-1zM414 234h1v1h-1zM422 233h1v1h-1zM423 233h1v1h-1zM437 224h1v1h-1zM438 224h1v1h-1zM439 224h1v1h-1zM458 210h1v1h-1zM459 209h1v1h-1zM460 209h1v1h-1zM489 223h1v1h-1zM490 225h1v1h-1zM492 228h1v1h-1zM493 229h1v1h-1zM494 229h1v1h-1zM495 228h1v1h-1zM503 218h1v1h-1zM527 234h1v1h-1zM533 236h1v1h-1zM534 236h1v1h-1zM539 244h1v1h-1zM540 246h1v1h-1zM563 238h1v1h-1zM615 203h1v1h-1zM616 202h1v1h-1zM623 206h1v1h-1zM624 206h1v1h-1zM629 211h1v1h-1zM630 211h1v1h-1zM635 213h1v1h-1zM645 213h1v1h-1zM652 227h1v1h-1zM653 228h1v1h-1zM666 227h1v1h-1zM679 241h1v1h-1zM680 241h1v1h-1z" fill="#0060ff"/>
</g>
<rect x="583" y="218" width="124" height="78" fill="#8b968e" fill-opacity="0.12"/>
<g shape-rendering="crispEdges">
<path d="M16 257H17V258H19V257H20V256H21V254H22V256H23V257H26V258H28V255H29V254H30V255H32V256H33V257H35V258H37V255H38V256H40V254H41V256H43V253H44V255H47V254H49V253H50V254H51V253H52V252H53V254H54V256H55V252H56V255H58V258H60V257H61V255H62V263H63V255H64V253H65V256H66V257H67V258H68V259H70V258H71V259H72V258H74V256H75V257H77V264H78V263H79V255H80V254H82V257H83V258H86V257H87V255H90V258H92V257H93V258H94V256H96V255H98V256H100V257H101V258H103V257H105V258H106V257H107V255H109V257H110V254H111V255H112V256H114V257H115V258H116V263H117V258H118V264H119V265H122V266H123V269H124V275H125V273H126V267H127V264H128V267H129V265H130V264H131V263H134V258H137V256H139V255H141V257H142V265H143V258H145V257H147V258H148V256H150V255H151V254H152V256H153V257H156V254H157V255H158V253H159V252H160V254H161V255H165V253H166V256H168V255H170V254H171V255H172V256H173V255H174V257H176V255H177V257H178V256H179V258H181V257H182V258H183V256H184V257H185V256H186V254H187V252H188V253H189V256H192V255H194V257H196V254H197V257H199V253H200V255H201V256H202V258H203V256H204V258H208V257H210V256H211V255H212V257H213V255H216V254H217V256H218V257H224V256H225V257H226V256H228V257H229V258H232V263H233V268H234V258H238V256H239V255H240V256H241V258H245V257H246V263H249V257H250V258H254V265H255V257H256V255H257V253H258V256H259V257H260V258H263V259H265V258H268V256H270V257H272V258H273V255H274V256H275V258H276V256H277V255H278V258H279V259H280V258H285V256H286V257H287V258H291V257H292V258H295V257H296V256H298V257H299V258H300V257H302V258H304V257H305V255H307V252H308V256H309V255H310V257H311V258H313V259H314V258H315V257H316V256H317V255H318V257H319V256H320V258H321V256H324V265H325V263H326V256H328V258H331V257H336V256H337V257H338V256H339V253H340V254H341V252H342V253H343V255H345V258H346V257H347V255H348V254H350V257H351V258H354V256H356V255H358V253H359V255H361V254H362V256H363V254H364V256H366V255H367V256H368V257H370V256H372V255H373V253H374V254H375V256H377V254H378V252H379V253H380V256H381V255H382V257H383V255H384V266H385V257H387V255H388V253H389V252H390V251H391V254H392V256H393V254H395V255H396V257H397V258H399V259H401V258H403V257H404V256H406V255H407V253H408V255H409V257H410V256H412V257H413V258H414V255H415V256H418V253H419V255H420V257H422V256H423V257H424V256H426V255H427V257H428V256H429V258H430V257H431V258H433V259H434V258H435V257H436V255H437V256H438V258H441V257H442V258H444V255H445V254H446V253H447V251H448V255H449V254H450V256H451V258H452V257H453V256H456V257H457V258H460V257H461V254H463V253H464V252H465V254H466V256H469V258H474V256H475V252H476V256H477V257H479V258H482V257H483V255H484V256H485V258H487V257H488V258H489V257H490V256H491V257H493V258H495V259H497V256H499V255H501V254H503V258H507V257H508V256H510V257H511V256H512V255H513V256H515V257H517V258H519V256H520V253H521V254H522V258H523V256H524V254H525V256H526V255H529V256H530V254H531V256H532V255H533V258H539V263H540V257H541V255H542V254H543V255H544V257H545V258H546V257H551V258H552V255H553V252H554V254H555V256H556V255H559V256H561V255H562V252H563V257H564V255H565V256H568V259H569V258H570V255H571V254H572V255H573V258H574V263H575V258H578V257H580V256H581V254H582V257H583V258H586V257H587V256H588V257H589V255H591V257H592V255H593V256H594V257H599V258H600V255H601V256H604V257H607V258H610V257H614V258H615V257H617V254H618V255H619V257H621V255H622V257H623V256H624V259H625V258H627V257H628V258H631V259H632V258H637V257H638V258H639V256H640V258H643V257H646V258H647V257H648V265H649V263H650V257H651V258H653V257H654V255H655V256H656V259H658V257H659V258H660V257H661V258H662V257H663V256H665V255H668V256H670V257H671V258H672V257H675V256H676V258H682V256H683V253H684V255H685V258H689V259H690V258H693V256H696V258H697V256H698V257H699V263H700V253H701V252H703V254H704V256H705V255H707V254H708V257H709V259H701V261H700V263H699V260H698V259H688V258H686V259H681V258H680V259H676V260H675V262H673V259H669V260H667V259H661V260H653V259H650V263H649V265H648V261H647V260H646V259H631V258H625V259H621V258H613V259H611V258H610V261H609V262H608V260H607V258H606V259H586V260H584V259H582V260H580V259H577V260H576V262H575V263H574V260H573V259H566V260H565V259H560V260H557V259H555V260H552V259H547V260H543V259H541V261H540V263H539V261H538V259H536V258H535V259H530V258H523V259H522V258H517V259H510V258H507V259H501V261H500V262H499V261H498V260H496V259H495V260H494V259H479V260H478V262H477V261H476V259H474V260H472V259H463V260H462V262H460V259H446V261H445V262H444V260H443V259H442V258H441V259H440V258H438V259H426V260H422V259H419V260H415V259H414V260H409V259H408V260H407V259H401V260H399V261H398V258H395V259H393V258H391V259H386V261H385V266H384V260H383V258H380V259H369V260H364V259H357V261H356V260H355V259H354V258H349V259H347V258H338V259H337V258H326V263H325V265H324V261H323V259H318V258H315V260H313V258H310V259H307V262H306V261H305V260H303V259H293V260H287V261H286V262H284V260H283V259H280V260H274V259H272V260H269V259H267V260H261V259H259V260H258V259H256V262H255V265H254V262H253V261H252V262H249V263H246V262H243V261H241V260H237V259H235V262H234V268H233V263H232V260H231V259H221V260H219V259H217V260H216V258H213V259H207V260H206V262H205V260H204V258H199V259H198V258H194V259H191V258H187V259H186V260H185V262H184V260H183V258H178V259H175V258H170V259H169V258H164V259H156V260H154V259H146V260H144V261H143V265H142V261H141V259H139V260H137V261H136V262H134V263H131V264H130V265H129V267H128V264H127V267H126V273H125V275H124V269H123V266H122V265H119V264H118V262H117V263H116V262H115V261H114V260H111V259H107V261H106V262H105V260H104V258H101V259H92V260H86V259H83V260H81V259H80V262H79V263H78V264H77V260H68V259H65V261H63V263H62V260H60V259H57V260H55V259H48V262H47V261H46V262H45V259H41V258H38V259H37V258H32V259H30V258H28V260H27V262H26V261H25V258H24V259H21V258H16Z" fill="#000"/>
</g>
<g fill="none">
<path d="M16.25 185.5H709" stroke="#22a8dc" stroke-dasharray="7.8 5.075"/>
<path d="M15.8 260H709" stroke="#1c8c9c" stroke-width="2" stroke-dasharray="4.5 3.45"/>
</g>
<g fill="#d9ddd9">
<polygon points="7.75,2 19.5,2 19.5,5 10,5 10,7.5 17.5,7.5 19.5,9.5 19.5,13.5 17.75,15.25 6,15.25 6,12.25 15.5,12.25 15.5,10.75 8,10.75 6,8.75 6,3.75"/>
<rect x="21.25" y="2" width="3.75" height="13.25"/>
<polygon points="28,2 39.5,2 39.5,5 30,5 30,12.25 35.5,12.25 35.5,10.75 32.75,10.75 31.25,9.25 31.25,7.5 39.5,7.5 39.5,15.25 28,15.25 26.2,13.5 26.2,3.75"/>
<polygon points="41.5,1.95 45.6,1.95 45.6,12.8 53,12.8 53,15.8 43.2,15.8 41.5,14.1"/>
<polygon points="56.5,1.95 66.4,1.95 66.4,5.2 58.2,5.2 58.2,7.4 66.4,7.4 66.4,10.4 58.2,10.4 58.2,12.55 66.4,12.55 66.4,15.8 56.5,15.8 53.4,12.7 53.4,5.05"/>
<polygon points="67.7,1.95 71.5,1.95 78.6,10.5 78.6,1.95 82,1.95 82,15.8 78.2,15.8 70.8,7 70.8,15.8 67.7,15.8"/>
<polygon points="83.1,1.95 96.1,1.95 96.1,5.2 92,5.2 92,15.8 87,15.8 87,5.2 83.1,5.2"/>
</g>
<rect x="107" y="1" width="44" height="16" fill="#e00000"/>
<text x="114.2" y="13.7" font-size="13" fill="#100000">Stop</text>
<text x="156.2" y="13.6" font-size="13" fill="#c8c8c8">M 500us/</text>
<text x="221.2" y="13.6" font-size="13" fill="#c8c8c8">Delay:0.00s</text>
<text x="796" y="15" font-size="15" fill="#22c0c8" text-anchor="end">f &lt; 10Hz</text>
<polygon points="353,19 372,19 362.5,29" fill="#18acdc"/><path d="M362.5 19V27" stroke="#50d0f0" stroke-width="1"/>
<polygon points="3,208.8 8,208.8 15,215.8 8,222.7 3,222.7" fill="#1cd0d8"/>
<text x="3.9" y="219.8" font-size="11.5" fill="#082020">3</text>
<polygon points="709.5,152 709.5,169.5 700,160.75" fill="#1cd0d8"/>
<rect x="710" y="19" width="86" height="39" fill="#000"/>
<text x="711.5" y="34" font-size="13" fill="#c8c8c8">Sa 1.00GSa/s</text>
<text x="711" y="53.5" font-size="13" fill="#c8c8c8">Curr 7.00Mpts</text>
<rect x="710" y="58.5" width="86" height="76.5" fill="#333333"/>
<path d="M710,59H796" stroke="#3d3d3d" stroke-width="1"/>
<text x="712" y="75" font-size="12.5" fill="#22c0c8">Edge</text>
<rect x="762.2" y="62.2" width="31" height="16.7" rx="3.5" fill="#1fd2d8"/>
<text x="767" y="74.7" font-size="13" fill="#062020">CH3</text>
<path d="M723.5,99.2H732V88.6H738.5" fill="none" stroke="#22c8d0" stroke-width="1.5"/>
<polygon points="728.6,94.6 735.7,94.6 732.15,91" fill="#22c8d0"/>
<text x="790.5" y="99.8" font-size="13" fill="#22c0c8" text-anchor="end">DC</text>
<text x="711.8" y="124.7" font-size="13" fill="#22c0c8">L</text>
<text x="793" y="124.7" font-size="13" fill="#22c0c8" text-anchor="end">224 mV</text>
<rect x="709.5" y="140" width="86.5" height="52.5" fill="#333333"/><path d="M710 192H796" stroke="#444" stroke-width="1"/>
<path d="M710,140.5H796" stroke="#3d3d3d" stroke-width="1"/>
<path d="M710,141H736A3.5,3.5 0 0 1 739.6,144.5V157H710Z" fill="#262626"/>
<text x="724" y="154.7" font-size="13" fill="#22c0c8" text-anchor="middle">3</text>
<rect x="754" y="143.2" width="39.6" height="14.4" rx="4" fill="#1fd2d8"/>
<text x="755.8" y="154.8" font-size="13" fill="#062020">DC1M</text>
<text x="716.5" y="172" font-size="13" fill="#c8c8c8">10X</text>
<text x="794" y="172" font-size="13" fill="#c8c8c8" text-anchor="end">200mV/</text>
<text x="794" y="188" font-size="13" fill="#c8c8c8" text-anchor="end">0.0V</text>
<rect x="583.5" y="218.5" width="123" height="77" fill="none" stroke="#5a5e5a" stroke-width="1"/>
<text x="595.5" y="236.2" font-size="14" fill="#32b4ec" textLength="85" lengthAdjust="spacingAndGlyphs">△Y = 300.0mV</text>
<text x="595.5" y="253.8" font-size="14" fill="#32b4ec" textLength="82.5" lengthAdjust="spacingAndGlyphs">Y2 = 128.0mV</text>
<text x="595.5" y="269.6" font-size="14" fill="#22c0c8" textLength="86" lengthAdjust="spacingAndGlyphs">Y1 = -172.0mV</text>
</svg></body></html>
